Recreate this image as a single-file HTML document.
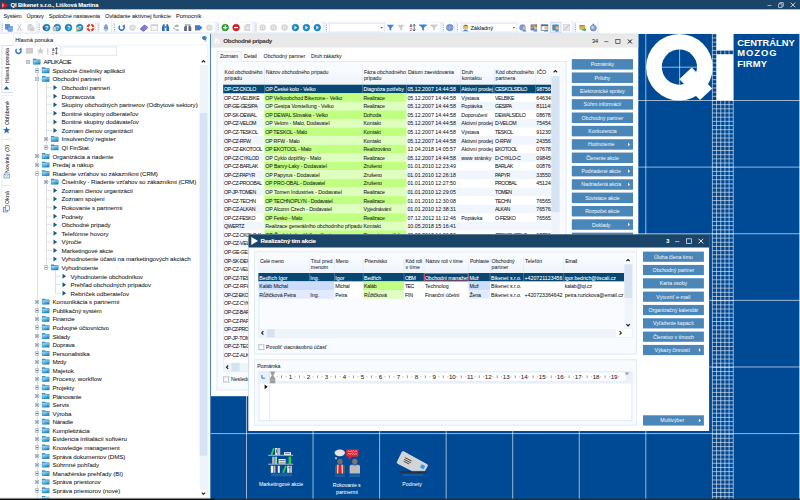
<!DOCTYPE html>
<html lang="sk"><head><meta charset="utf-8"><title>QI Bikenet s.r.o.</title>
<style>
html,body{margin:0;padding:0;}
body{width:800px;height:500px;overflow:hidden;background:#fff;position:relative;font-family:"Liberation Sans",sans-serif;color:#222;}
div{position:absolute;box-sizing:border-box;}
.t{white-space:nowrap;text-shadow:0 0 .6px rgba(20,20,35,.3);}
.w{text-shadow:0 0 .6px rgba(255,255,255,.3);}
svg{position:absolute;overflow:visible;}

</style></head><body>
<svg width="800" height="500" viewBox="0 0 800 500" style="left:0;top:0"><rect x="210.3" y="33.33" width="590" height="467" fill="#004a95"/><path d="M210 100.50H800M210 167.12H800M210 233.74H800M210 300.36H800M210 366.98H800M210 433.60H800M246.50 33.33V500M313.05 33.33V500M379.60 33.33V500M446.15 33.33V500M512.70 33.33V500M579.25 33.33V500M645.80 33.33V500M799.5 33.33V500" stroke="#fff" stroke-opacity=".6" stroke-width="1" fill="none"/><path d="M712.40 33.33V500M716.57 33.33V500M720.74 33.33V500M724.91 33.33V500M729.08 33.33V500M733.25 33.33V500M712.40 33.78H733.25M712.40 37.95H733.25M712.40 42.12H733.25M712.40 46.29H733.25M712.40 50.46H733.25M712.40 54.63H733.25M712.40 58.80H733.25M712.40 62.97H733.25M712.40 67.14H733.25M712.40 71.31H733.25M712.40 75.48H733.25M712.40 79.65H733.25M712.40 83.82H733.25M712.40 87.99H733.25M712.40 92.16H733.25M712.40 96.33H733.25M712.40 100.50H733.25M712.40 104.67H733.25M712.40 108.84H733.25M712.40 113.01H733.25M712.40 117.18H733.25M712.40 121.35H733.25M712.40 125.52H733.25M712.40 129.69H733.25M712.40 133.86H733.25M712.40 138.03H733.25M712.40 142.20H733.25M712.40 146.37H733.25M712.40 150.54H733.25M712.40 154.71H733.25M712.40 158.88H733.25M712.40 163.05H733.25M712.40 167.22H733.25M712.40 171.39H733.25M712.40 175.56H733.25M712.40 179.73H733.25M712.40 183.90H733.25M712.40 188.07H733.25M712.40 192.24H733.25M712.40 196.41H733.25M712.40 200.58H733.25M712.40 204.75H733.25M712.40 208.92H733.25M712.40 213.09H733.25M712.40 217.26H733.25M712.40 221.43H733.25M712.40 225.60H733.25M712.40 229.77H733.25M712.40 233.94H733.25M712.40 238.11H733.25M712.40 242.28H733.25M712.40 246.45H733.25M712.40 250.62H733.25M712.40 254.79H733.25M712.40 258.96H733.25M712.40 263.13H733.25M712.40 267.30H733.25M712.40 271.47H733.25M712.40 275.64H733.25M712.40 279.81H733.25M712.40 283.98H733.25M712.40 288.15H733.25M712.40 292.32H733.25M712.40 296.49H733.25M712.40 300.66H733.25M712.40 304.83H733.25M712.40 309.00H733.25M712.40 313.17H733.25M712.40 317.34H733.25M712.40 321.51H733.25M712.40 325.68H733.25M712.40 329.85H733.25M712.40 334.02H733.25M712.40 338.19H733.25M712.40 342.36H733.25M712.40 346.53H733.25M712.40 350.70H733.25M712.40 354.87H733.25M712.40 359.04H733.25M712.40 363.21H733.25M712.40 367.38H733.25M712.40 371.55H733.25M712.40 375.72H733.25M712.40 379.89H733.25M712.40 384.06H733.25M712.40 388.23H733.25M712.40 392.40H733.25M712.40 396.57H733.25M712.40 400.74H733.25M712.40 404.91H733.25M712.40 409.08H733.25M712.40 413.25H733.25M712.40 417.42H733.25M712.40 421.59H733.25M712.40 425.76H733.25M712.40 429.93H733.25M712.40 434.10H733.25M712.40 438.27H733.25M712.40 442.44H733.25M712.40 446.61H733.25M712.40 450.78H733.25M712.40 454.95H733.25M712.40 459.12H733.25M712.40 463.29H733.25M712.40 467.46H733.25M712.40 471.63H733.25M712.40 475.80H733.25M712.40 479.97H733.25M712.40 484.14H733.25M712.40 488.31H733.25M712.40 492.48H733.25M712.40 496.65H733.25" stroke="#fff" stroke-opacity=".6" stroke-width=".95" fill="none"/><circle cx="679.4" cy="67.2" r="33.3" fill="#fff"/><circle cx="679.4" cy="67.1" r="17.6" fill="#004a95"/><path d="M661.8 67.2H697M679.6 49.5V84.7" stroke="#fff" stroke-opacity=".6" stroke-width="1" fill="none"/><path d="M691.7 67.5L712.2 88.5L700 99.9L679.3 79.2Z" fill="#fff"/><rect x="716.57" y="33.33" width="16.68" height="16.77" fill="#fff"/><rect x="716.57" y="54.4" width="16.68" height="45.7" fill="#fff"/></svg>
<div class="t w" style="left:737.2px;top:36px;font-size:9.4px;line-height:14px;letter-spacing:-0.04px;color:#fff;font-weight:bold;text-shadow:none;">CENTRÁLNY</div>
<div class="t w" style="left:737.2px;top:46px;font-size:9.4px;line-height:14px;letter-spacing:0.96px;color:#fff;font-weight:bold;text-shadow:none;">MOZOG</div>
<div class="t w" style="left:737.2px;top:57px;font-size:9.4px;line-height:14px;letter-spacing:0.15px;color:#fff;font-weight:bold;text-shadow:none;">FIRMY</div>
<svg width="800" height="500" viewBox="0 0 800 500" style="left:0;top:0"><rect x="0" y="9" width="800" height="24.9" fill="#fff"/><rect x="0" y="0" width="800" height="9.35" fill="#1b4568"/></svg>
<svg width="8" height="9" viewBox="0 0 8 9" style="left:1px;top:0.5px"><path d="M0.6 0.6L7.4 4.3L0.6 8.2Z" fill="#e0161c"/><path d="M1.2 2.2L3.2 4.3L1.2 6.4" fill="#fff" fill-opacity=".55"/></svg>
<div class="t w" style="left:10.5px;top:1px;font-size:5.8px;line-height:9px;letter-spacing:-0.09px;color:#fff;font-weight:bold;">QI  Bikenet s.r.o., Lišková Martina</div>
<div class="t w" style="left:767.55px;top:0px;font-size:7px;line-height:10px;color:#dfe8f0;">–</div>
<svg width="6" height="6" viewBox="0 0 6 6" style="left:778.4px;top:1.8px"><path d="M0.6 1.8H4V5.4H0.6ZM1.8 1.8V0.6H5.3V4.2H4" fill="none" stroke="#dfe8f0" stroke-width=".7"/></svg>
<svg width="6" height="6" viewBox="0 0 6 6" style="left:790.4px;top:1.8px"><path d="M0.6 0.6L5.2 5.2M5.2 0.6L0.6 5.2" fill="none" stroke="#eef3f8" stroke-width=".8"/></svg>
<div class="t" style="left:3.5px;top:12px;font-size:5.71px;line-height:8px;letter-spacing:-0.19px;color:#2a2a2a;">Systém</div>
<div class="t" style="left:26.4px;top:12px;font-size:5.71px;line-height:8px;letter-spacing:-0.11px;color:#2a2a2a;">Úpravy</div>
<div class="t" style="left:48.7px;top:12px;font-size:5.71px;line-height:8px;letter-spacing:-0.09px;color:#2a2a2a;">Spoločné nastavenia</div>
<div class="t" style="left:105px;top:12px;font-size:5.71px;line-height:8px;letter-spacing:-0.03px;color:#2a2a2a;">Ovládanie aktívnej funkcie</div>
<div class="t" style="left:176px;top:12px;font-size:5.71px;line-height:8px;letter-spacing:0px;color:#2a2a2a;">Pomocník</div>
<svg width="800" height="500" viewBox="0 0 800 500" style="left:0;top:0"><path d="M0.3 22.1H36.6" stroke="#f3f7fc" stroke-width="1" fill="none"/><path d="M0.3 32.9H36.6M0.8 21.6V33.4M36.1 21.6V33.4" stroke="#e3ecf8" stroke-width="1" fill="none"/><path d="M37.2 22.1H96.2" stroke="#f3f7fc" stroke-width="1" fill="none"/><path d="M37.2 32.9H96.2M37.7 21.6V33.4M95.7 21.6V33.4" stroke="#e3ecf8" stroke-width="1" fill="none"/><path d="M96.8 22.1H112" stroke="#f3f7fc" stroke-width="1" fill="none"/><path d="M96.8 32.9H112M97.3 21.6V33.4M111.5 21.6V33.4" stroke="#e3ecf8" stroke-width="1" fill="none"/><path d="M112.6 22.1H215.6" stroke="#f3f7fc" stroke-width="1" fill="none"/><path d="M112.6 32.9H215.6M113.1 21.6V33.4M215.1 21.6V33.4" stroke="#e3ecf8" stroke-width="1" fill="none"/><path d="M216.2 22.1H253.4" stroke="#f3f7fc" stroke-width="1" fill="none"/><path d="M216.2 32.9H253.4M216.7 21.6V33.4M252.9 21.6V33.4" stroke="#e3ecf8" stroke-width="1" fill="none"/><path d="M254 22.1H323.8" stroke="#f3f7fc" stroke-width="1" fill="none"/><path d="M254 32.9H323.8M254.5 21.6V33.4M323.3 21.6V33.4" stroke="#e3ecf8" stroke-width="1" fill="none"/><path d="M324.4 22.1H440.7" stroke="#f3f7fc" stroke-width="1" fill="none"/><path d="M324.4 32.9H440.7M324.9 21.6V33.4M440.2 21.6V33.4" stroke="#e3ecf8" stroke-width="1" fill="none"/><path d="M441.3 22.1H455" stroke="#f3f7fc" stroke-width="1" fill="none"/><path d="M441.3 32.9H455M441.8 21.6V33.4M454.5 21.6V33.4" stroke="#e3ecf8" stroke-width="1" fill="none"/><path d="M455.6 22.1H572.8" stroke="#f3f7fc" stroke-width="1" fill="none"/><path d="M455.6 32.9H572.8M456.1 21.6V33.4M572.3 21.6V33.4" stroke="#e3ecf8" stroke-width="1" fill="none"/><path d="M573.4 22.1H598.4" stroke="#f3f7fc" stroke-width="1" fill="none"/><path d="M573.4 32.9H598.4M573.9 21.6V33.4M597.9 21.6V33.4" stroke="#e3ecf8" stroke-width="1" fill="none"/><rect x="328.8" y="22.6" width="56.4" height="10" fill="#fff"/><path d="M328.8 23.1H385.2M328.8 32.1H385.2M329.3 22.6V32.6M384.7 22.6V32.6" stroke="#dbe6f5" stroke-width="1" fill="none"/><rect x="460.6" y="22.6" width="56.8" height="10" fill="#fff"/><path d="M460.6 23.1H517.4M460.6 32.1H517.4M461.1 22.6V32.6M516.9 22.6V32.6" stroke="#dbe6f5" stroke-width="1" fill="none"/></svg>
<div class="t" style="left:470.4px;top:24px;font-size:5.71px;line-height:8px;letter-spacing:-0.07px;color:#2a2a2a;">Základný</div>
<svg width="800" height="500" viewBox="0 0 800 500" style="left:0;top:0"><rect x="0" y="33.1" width="601" height="0.7" fill="#e3ecf7"/></svg>
<svg width="800" height="500" viewBox="0 0 800 500" style="left:0;top:0;font-family:'Liberation Sans',sans-serif"><path d="M2.3 23.6V31.4" stroke="#6f93c4" stroke-width=".9" stroke-dasharray=".9 .9" fill="none"/><rect x="5.300000000000001" y="24.200000000000003" width="4.4" height="5" fill="#5b8fd6" stroke="#3f6fb5" stroke-width=".4"/><rect x="7.9" y="26.200000000000003" width="4.6" height="5" fill="#7ba7e4" stroke="#3f6fb5" stroke-width=".4"/><path d="M17.9 24.400000000000002L20.7 29.200000000000003M21.1 24.400000000000002L18.3 29.200000000000003" stroke="#bdbdbd" stroke-width=".8" fill="none"/><circle cx="17.9" cy="30.0" r="1" fill="none" stroke="#c4c4c4" stroke-width=".6"/><circle cx="21.1" cy="30.0" r="1" fill="none" stroke="#c4c4c4" stroke-width=".6"/><rect x="27.299999999999997" y="25.0" width="5.6" height="5.6" fill="#d9d9d9"/><rect x="29.9" y="27.0" width="4.6" height="4.2" fill="#cfcfcf" stroke="#eee" stroke-width=".4"/><rect x="28.7" y="24.0" width="2.8" height="1.4" fill="#c8c8c8"/><path d="M39.2 23.6V31.4" stroke="#6f93c4" stroke-width=".9" stroke-dasharray=".9 .9" fill="none"/><circle cx="46.599999999999994" cy="27.6" r="3.4" fill="#1593cf"/><circle cx="46.599999999999994" cy="27.6" r="3.4" fill="none" stroke="#0c5f9a" stroke-width=".5"/><text x="46.699999999999996" y="29.5" font-size="5.4" font-weight="bold" fill="#e8f6ff" text-anchor="middle">?</text><path d="M42.5 25.8L45.099999999999994 28.0L43.099999999999994 30.200000000000003Z" fill="#e21d1d"/><circle cx="57.199999999999996" cy="27.6" r="3.4" fill="#1593cf"/><circle cx="57.199999999999996" cy="27.6" r="3.4" fill="none" stroke="#0c5f9a" stroke-width=".5"/><text x="57.3" y="29.5" font-size="5.4" font-weight="bold" fill="#e8f6ff" text-anchor="middle">?</text><rect x="53.0" y="26.8" width="3.2" height="4.2" fill="#c9c9c9" stroke="#8d8d8d" stroke-width=".4"/><circle cx="68.5" cy="27.6" r="3.4" fill="#1593cf"/><circle cx="68.5" cy="27.6" r="3.4" fill="none" stroke="#0c5f9a" stroke-width=".5"/><text x="68.60000000000001" y="29.5" font-size="5.4" font-weight="bold" fill="#e8f6ff" text-anchor="middle">?</text><circle cx="79.6" cy="27.6" r="3.4" fill="#1593cf"/><circle cx="79.6" cy="27.6" r="3.4" fill="none" stroke="#0c5f9a" stroke-width=".5"/><text x="79.7" y="29.5" font-size="5.4" font-weight="bold" fill="#e8f6ff" text-anchor="middle">?</text><circle cx="77.5" cy="28.200000000000003" r="1.5" fill="#f1c59a"/><path d="M75.39999999999999 31.400000000000002Q77.5 28.400000000000002 79.7 31.400000000000002Z" fill="#53b14b"/><circle cx="90.5" cy="27.6" r="2.9" fill="none" stroke="#d9432a" stroke-width="2"/><path d="M86.6 27.6H88.6M92.4 27.6H94.4M90.5 23.700000000000003V25.700000000000003M90.5 29.5V31.5" stroke="#fff" stroke-width="1.4"/><path d="M98.8 23.6V31.4" stroke="#6f93c4" stroke-width=".9" stroke-dasharray=".9 .9" fill="none"/><path d="M103.8 29.6Q104 24.200000000000003 106 24.200000000000003Q108 24.200000000000003 108.2 29.6Z" fill="#7fa0c8"/><rect x="103.4" y="29.200000000000003" width="5.2" height="1" fill="#a9c0dc"/><circle cx="106" cy="30.6" r=".8" fill="#8aa6c8"/><path d="M114.6 23.6V31.4" stroke="#6f93c4" stroke-width=".9" stroke-dasharray=".9 .9" fill="none"/><path d="M119.8 25.700000000000003A2.6 2.6 0 1 0 124.2 27.200000000000003" fill="none" stroke="#2f6fd6" stroke-width="1.5"/><path d="M122.10000000000001 26.3L124.7 24.3L124.9 27.8Z" fill="#2f6fd6"/><circle cx="132.5" cy="27.6" r="3.2" fill="#d6d6d6"/><circle cx="132.5" cy="27.6" r="1.9" fill="#e4e4e4"/><path d="M140.1 28.200000000000003L144.3 24.400000000000002L147.70000000000002 26.6L143.70000000000002 30.6Z" fill="#8078d0"/><path d="M140.1 28.200000000000003L143.70000000000002 30.6L147.70000000000002 26.6V28.0L143.70000000000002 31.8L140.1 29.400000000000002Z" fill="#5f58b4"/><rect x="151.0" y="24.8" width="6.8" height="5.6" fill="#f6f6f6" stroke="#bdbdbd" stroke-width=".6"/><rect x="151.0" y="24.8" width="6.8" height="1.2" fill="#cfcfcf"/><path d="M161.9 31.0V27.200000000000003L163.1 24.200000000000003H164.7V31.0ZM169.1 31.0V27.200000000000003L167.9 24.200000000000003H166.3V31.0Z" fill="#2e6cb8"/><rect x="164.5" y="26.0" width="2" height="2" fill="#5a8fd0"/><text x="176.4" y="27.0" font-size="3.6" fill="#3c4a5c" text-anchor="middle">ab</text><text x="177.4" y="30.8" font-size="3.6" fill="#2e8a4a" text-anchor="middle">ac</text><path d="M173.20000000000002 27.8L175.20000000000002 29.400000000000002" stroke="#3f77c9" stroke-width=".8"/><path d="M184.1 31.0V27.6L185.29999999999998 25.200000000000003H186.89999999999998V31.0ZM191.29999999999998 31.0V27.6L190.1 25.200000000000003H188.5V31.0Z" fill="#5d6776"/><rect x="184.7" y="24.0" width="6" height="1.6" fill="#b9bfc8"/><rect x="195.0" y="25.200000000000003" width="5" height="5.2" fill="#6b7685"/><path d="M197.6 26.0H200.6L202.4 27.8L200.6 29.6H197.6Z" fill="#2f7de0"/><circle cx="209.4" cy="27.6" r="3.2" fill="#d6d6d6"/><circle cx="209.4" cy="27.6" r="1.9" fill="#e4e4e4"/><path d="M218.2 23.6V31.4" stroke="#6f93c4" stroke-width=".9" stroke-dasharray=".9 .9" fill="none"/><circle cx="225.2" cy="27.6" r="3.4" fill="#2aa52e"/><circle cx="225.2" cy="27.6" r="3.4" fill="none" stroke="#1c7a22" stroke-width=".5"/><path d="M223.2 27.6H227.2M225.2 25.6V29.6" stroke="#fff" stroke-width="1.1"/><circle cx="236.1" cy="27.6" r="3.4" fill="#d3222a"/><circle cx="236.1" cy="27.6" r="3.4" fill="none" stroke="#a2161d" stroke-width=".5"/><path d="M234.0 27.6H238.2" stroke="#fff" stroke-width="1.2"/><path d="M244.1 31.0V26.0L246.5 24.0H250.1V31.0Z" fill="#d6d6d6"/><rect x="245.9" y="26.400000000000002" width="3" height="3" fill="#e6e6e6"/><path d="M256 23.6V31.4" stroke="#6f93c4" stroke-width=".9" stroke-dasharray=".9 .9" fill="none"/><circle cx="262.6" cy="27.6" r="3.3" fill="#d8d8d8"/><path d="M261.6 26.0V29.200000000000003M263.6 26.0V29.200000000000003" stroke="#ececec" stroke-width=".9"/><circle cx="273.6" cy="27.6" r="3.3" fill="#d8d8d8"/><path d="M272.6 26.0V29.200000000000003M274.6 26.0V29.200000000000003" stroke="#ececec" stroke-width=".9"/><circle cx="284.5" cy="27.6" r="3.3" fill="#d8d8d8"/><path d="M283.5 26.0V29.200000000000003M285.5 26.0V29.200000000000003" stroke="#ececec" stroke-width=".9"/><circle cx="295.4" cy="27.6" r="3.35" fill="#1a8fc9"/><circle cx="295.4" cy="27.6" r="3.35" fill="none" stroke="#0f6aa3" stroke-width=".5"/><path d="M294.4 25.8L297.0 27.6L294.4 29.400000000000002Z" fill="#e9f6ff"/><circle cx="306.4" cy="27.6" r="3.35" fill="#1a8fc9"/><circle cx="306.4" cy="27.6" r="3.35" fill="none" stroke="#0f6aa3" stroke-width=".5"/><path d="M305.4 25.8L308.0 27.6L305.4 29.400000000000002Z" fill="#e9f6ff"/><circle cx="317.3" cy="27.6" r="3.35" fill="#1a8fc9"/><circle cx="317.3" cy="27.6" r="3.35" fill="none" stroke="#0f6aa3" stroke-width=".5"/><path d="M316.3 25.8L318.90000000000003 27.6L316.3 29.400000000000002Z" fill="#e9f6ff"/><path d="M326.4 23.6V31.4" stroke="#6f93c4" stroke-width=".9" stroke-dasharray=".9 .9" fill="none"/><path d="M386.79999999999995 24.8H394.0L391.29999999999995 28.0V30.8L389.5 29.8V28.0Z" fill="#3b7fe0"/><path d="M397.4 24.8H404.6L401.9 28.0V30.8L400.1 29.8V28.0Z" fill="#cdcdcd"/><text x="410.79999999999995" y="27.400000000000002" font-size="3.8" font-weight="bold" fill="#2d59b0" text-anchor="middle">A</text><text x="410.79999999999995" y="31.200000000000003" font-size="3.8" font-weight="bold" fill="#b03030" text-anchor="middle">Z</text><path d="M414.2 24.6V30.6M413.0 25.8L414.2 24.200000000000003L415.4 25.8M413.0 29.400000000000002L414.2 31.0L415.4 29.400000000000002" stroke="#333" stroke-width=".7" fill="none"/><path d="M419.4 24.8H426.6L423.9 28.0V30.8L422.1 29.8V28.0Z" fill="#3b7fe0"/><path d="M419.2 24.6H426.8V26.0H419.2Z" fill="#3b7fe0" fill-opacity=".8"/><path d="M430.4 24.8H437.6L434.9 28.0V30.8L433.1 29.8V28.0Z" fill="#cdcdcd"/><path d="M430.2 24.6H437.8V26.0H430.2Z" fill="#cdcdcd" fill-opacity=".8"/><path d="M443.3 23.6V31.4" stroke="#6f93c4" stroke-width=".9" stroke-dasharray=".9 .9" fill="none"/><circle cx="449.8" cy="27.6" r="3.4" fill="#7b97d6"/><circle cx="449.8" cy="27.6" r="3.4" fill="none" stroke="#5a78bd" stroke-width=".5"/><path d="M446.6 27.6H453.0M449.8 24.400000000000002V30.8" stroke="#a9bdea" stroke-width=".5"/><path d="M457.6 23.6V31.4" stroke="#6f93c4" stroke-width=".9" stroke-dasharray=".9 .9" fill="none"/><circle cx="465.6" cy="27.200000000000003" r="2.6" fill="#f0b87c"/><path d="M462.8 26.6Q465.6 23.0 468.40000000000003 26.6Q465.6 25.400000000000002 462.8 26.6Z" fill="#a8641c"/><path d="M462.20000000000005 31.200000000000003Q465.6 28.200000000000003 469.0 31.200000000000003Z" fill="#3a86d8"/><circle cx="522.5" cy="27.400000000000002" r="3.2" fill="#7b9be0"/><circle cx="524.5" cy="28.0" r="1.7" fill="#f0b87c"/><path d="M522.3000000000001 31.400000000000002Q524.5 28.8 526.7 31.400000000000002Z" fill="#3a86d8"/><rect x="530.6" y="24.400000000000002" width="6.4" height="6" fill="#5a78c8"/><path d="M531 28.6L535 24.6" stroke="#e8a020" stroke-width="1.4"/><circle cx="535.4" cy="28.0" r="1.7" fill="#f0b87c"/><path d="M533.2 31.400000000000002Q535.4 28.8 537.6 31.400000000000002Z" fill="#3a86d8"/><rect x="541.1" y="24.8" width="6.8" height="5.6" fill="#f4f6fa" stroke="#4a5a78" stroke-width=".6"/><rect x="541.1" y="24.8" width="6.8" height="1.3" fill="#51648a"/><circle cx="546.1" cy="28.0" r="1.7" fill="#f0b87c"/><path d="M543.9000000000001 31.400000000000002Q546.1 28.8 548.3000000000001 31.400000000000002Z" fill="#3a86d8"/><rect x="550.4" y="22.200000000000003" width="10.6" height="10.6" fill="#eaf2fc" stroke="#b7d0ee" stroke-width=".6"/><rect x="552.4" y="24.6" width="6.2" height="5.8" fill="#5a78c8"/><path d="M552.6 26.6L554.2 28.400000000000002L556.6 24.6" stroke="#36b24a" stroke-width="1.2" fill="none"/><circle cx="557.0" cy="28.0" r="1.7" fill="#f0b87c"/><path d="M554.8000000000001 31.400000000000002Q557.0 28.8 559.2 31.400000000000002Z" fill="#3a86d8"/><rect x="563.3" y="24.400000000000002" width="6.4" height="6.4" fill="#e9e9e9" stroke="#cfcfcf" stroke-width=".6"/><path d="M564.5 29.6L568.9 25.200000000000003" stroke="#c4c4c4" stroke-width="1.2"/><path d="M575.4 23.6V31.4" stroke="#6f93c4" stroke-width=".9" stroke-dasharray=".9 .9" fill="none"/><rect x="579.3000000000001" y="25.0" width="5.6" height="4.8" fill="#d9b45a"/><rect x="579.3000000000001" y="25.0" width="5.6" height="1.4" fill="#b98f32"/><path d="M582.1 29.200000000000003H584.3000000000001V27.8L586.5 29.8L584.3000000000001 31.6V30.400000000000002H582.1Z" fill="#2fae3a"/><circle cx="593.3" cy="28.0" r="3.1" fill="#8a9fd0"/><circle cx="593.3" cy="28.0" r="3.1" fill="none" stroke="#5d6f9c" stroke-width=".5"/><circle cx="592.6999999999999" cy="27.400000000000002" r="1.4" fill="#c9d6f2"/><rect x="592.5999999999999" y="23.700000000000003" width="1.4" height="1.2" fill="#5d6f9c"/><path d="M380.4 27.2H383L381.7 28.6Z" fill="#333"/><path d="M512.6 27.2H515.2L513.9 28.6Z" fill="#333"/></svg>
<svg width="800" height="500" viewBox="0 0 800 500" style="left:0;top:0"><rect x="0" y="33.9" width="210.3" height="464.8" fill="#fff"/><rect x="13.1" y="34" width="0.6" height="11" fill="#e3ecf7"/><rect x="13.4" y="44.8" width="194" height="0.6" fill="#e3ecf7"/><rect x="207.2" y="45" width="0.6" height="453" fill="#e3ecf7"/><rect x="207.8" y="33.9" width="2.4" height="465" fill="#f6f9fd"/><rect x="210.1" y="33.9" width="0.9" height="465" fill="#4a80b8"/><rect x="1.4" y="45" width="12" height="48" fill="#fff"/><path d="M1.4 45.5H13.4M1.4 92.5H13.4M1.9 45V93" stroke="#d3e1f4" stroke-width="1" fill="none"/><rect x="1.4" y="95" width="12" height="118" fill="#fff"/><path d="M1.4 95.5H13.4M1.9 95V213" stroke="#e6eef9" stroke-width="1" fill="none"/></svg>
<div class="t" style="left:3.73px;top:83px;font-size:5.24px;line-height:7.34px;letter-spacing:0px;color:#2a2a2a;transform-origin:0 0;transform:rotate(-90deg);">Hlavná ponuka</div>
<div class="t" style="left:3.73px;top:125px;font-size:5.24px;line-height:7.34px;letter-spacing:0.11px;color:#2a2a2a;transform-origin:0 0;transform:rotate(-90deg);">Obľúbené</div>
<div class="t" style="left:3.73px;top:172.5px;font-size:5.24px;line-height:7.34px;letter-spacing:0.14px;color:#2a2a2a;transform-origin:0 0;transform:rotate(-90deg);">Novinky (3)</div>
<div class="t" style="left:3.73px;top:203.8px;font-size:5.24px;line-height:7.34px;letter-spacing:0.12px;color:#2a2a2a;transform-origin:0 0;transform:rotate(-90deg);">Okná</div>
<svg width="800" height="500" viewBox="0 0 800 500" style="left:0;top:0"><rect x="2.2" y="139" width="9.4" height="0.6" fill="#cfdcee"/><rect x="2.2" y="185" width="9.4" height="0.6" fill="#cfdcee"/></svg>
<div class="t" style="left:15.2px;top:36px;font-size:5.71px;line-height:8px;letter-spacing:-0.01px;color:#2a2a2a;">Hlavná ponuka</div>
<svg width="800" height="500" viewBox="0 0 800 500" style="left:0;top:0"><rect x="60.4" y="46.4" width="56.4" height="9.4" fill="#fff"/><path d="M60.4 46.9H116.8M60.4 55.3H116.8M60.9 46.4V55.8M116.3 46.4V55.8" stroke="#dfe9f6" stroke-width="1" fill="none"/><rect x="199.7" y="65" width="7.6" height="425" fill="#eff4fa"/><rect x="199.7" y="113" width="7.6" height="342.6" fill="#d5e3f2"/></svg>
<div class="t" style="left:43.5px;top:57px;font-size:6.19px;line-height:9px;letter-spacing:-0.48px;color:#2a2a2a;">APLIKÁCIE</div>
<div class="t" style="left:52.5px;top:66px;font-size:6.19px;line-height:9px;letter-spacing:-0.11px;color:#2a2a2a;">Spoločné číselníky aplikácií</div>
<div class="t" style="left:52.5px;top:74px;font-size:6.19px;line-height:9px;letter-spacing:-0.06px;color:#2a2a2a;">Obchodní partneri</div>
<div class="t" style="left:61.5px;top:83px;font-size:6.19px;line-height:9px;letter-spacing:-0.06px;color:#2a2a2a;">Obchodní partneri</div>
<div class="t" style="left:61.5px;top:92px;font-size:6.19px;line-height:9px;letter-spacing:-0.13px;color:#2a2a2a;">Dopravcovia</div>
<div class="t" style="left:61.5px;top:100px;font-size:6.19px;line-height:9px;letter-spacing:-0.06px;color:#2a2a2a;">Skupiny obchodných partnerov (Odbytové sektory)</div>
<div class="t" style="left:61.5px;top:109px;font-size:6.19px;line-height:9px;letter-spacing:-0.05px;color:#2a2a2a;">Bonitné skupiny odberateľov</div>
<div class="t" style="left:61.5px;top:117px;font-size:6.19px;line-height:9px;letter-spacing:-0.07px;color:#2a2a2a;">Bonitné skupiny dodávateľov</div>
<div class="t" style="left:61.5px;top:126px;font-size:6.19px;line-height:9px;letter-spacing:-0.09px;color:#2a2a2a;">Zoznam členov organizácií</div>
<div class="t" style="left:61.5px;top:134px;font-size:6.19px;line-height:9px;letter-spacing:-0.04px;color:#2a2a2a;">Insolvenčný register</div>
<div class="t" style="left:61.5px;top:143px;font-size:6.19px;line-height:9px;letter-spacing:-0.06px;color:#2a2a2a;">QI FinStat</div>
<div class="t" style="left:52.5px;top:152px;font-size:6.19px;line-height:9px;letter-spacing:-0.05px;color:#2a2a2a;">Organizácia a riadenie</div>
<div class="t" style="left:52.5px;top:160px;font-size:6.19px;line-height:9px;letter-spacing:-0.06px;color:#2a2a2a;">Predaj a nákup</div>
<div class="t" style="left:52.5px;top:169px;font-size:6.19px;line-height:9px;letter-spacing:-0.1px;color:#2a2a2a;">Riadenie vzťahov so zákazníkmi (CRM)</div>
<div class="t" style="left:61.5px;top:177px;font-size:6.19px;line-height:9px;letter-spacing:-0.11px;color:#2a2a2a;">Číselníky - Riadenie vzťahov so zákazníkmi (CRM)</div>
<div class="t" style="left:61.5px;top:186px;font-size:6.19px;line-height:9px;letter-spacing:-0.09px;color:#2a2a2a;">Zoznam členov organizácií</div>
<div class="t" style="left:61.5px;top:194px;font-size:6.19px;line-height:9px;letter-spacing:-0.07px;color:#2a2a2a;">Zoznam spojení</div>
<div class="t" style="left:61.5px;top:203px;font-size:6.19px;line-height:9px;letter-spacing:-0.05px;color:#2a2a2a;">Rokovanie s partnermi</div>
<div class="t" style="left:61.5px;top:212px;font-size:6.19px;line-height:9px;letter-spacing:-0.17px;color:#2a2a2a;">Podnety</div>
<div class="t" style="left:61.5px;top:220px;font-size:6.19px;line-height:9px;letter-spacing:-0.12px;color:#2a2a2a;">Obchodné prípady</div>
<div class="t" style="left:61.5px;top:229px;font-size:6.19px;line-height:9px;letter-spacing:0px;color:#2a2a2a;">Telefónne hovory</div>
<div class="t" style="left:61.5px;top:237px;font-size:6.19px;line-height:9px;letter-spacing:-0.12px;color:#2a2a2a;">Výročie</div>
<div class="t" style="left:61.5px;top:246px;font-size:6.19px;line-height:9px;letter-spacing:-0.09px;color:#2a2a2a;">Marketingové akcie</div>
<div class="t" style="left:61.5px;top:254px;font-size:6.19px;line-height:9px;letter-spacing:-0.06px;color:#2a2a2a;">Vyhodnotenie účasti na marketingových akciách</div>
<div class="t" style="left:61.5px;top:263px;font-size:6.19px;line-height:9px;letter-spacing:-0.09px;color:#2a2a2a;">Vyhodnotenie</div>
<div class="t" style="left:70.5px;top:272px;font-size:6.19px;line-height:9px;letter-spacing:-0.09px;color:#2a2a2a;">Vyhodnotenie obchodníkov</div>
<div class="t" style="left:70.5px;top:280px;font-size:6.19px;line-height:9px;letter-spacing:-0.08px;color:#2a2a2a;">Prehľad obchodných prípadov</div>
<div class="t" style="left:70.5px;top:289px;font-size:6.19px;line-height:9px;letter-spacing:-0.04px;color:#2a2a2a;">Rebríček odberateľov</div>
<div class="t" style="left:52.5px;top:297px;font-size:6.19px;line-height:9px;letter-spacing:-0.05px;color:#2a2a2a;">Komunikácia s partnermi</div>
<div class="t" style="left:52.5px;top:306px;font-size:6.19px;line-height:9px;letter-spacing:-0.13px;color:#2a2a2a;">Publikačný systém</div>
<div class="t" style="left:52.5px;top:314px;font-size:6.19px;line-height:9px;letter-spacing:-0.17px;color:#2a2a2a;">Financie</div>
<div class="t" style="left:52.5px;top:323px;font-size:6.19px;line-height:9px;letter-spacing:-0.12px;color:#2a2a2a;">Podvojné účtovníctvo</div>
<div class="t" style="left:52.5px;top:332px;font-size:6.19px;line-height:9px;letter-spacing:-0.18px;color:#2a2a2a;">Sklady</div>
<div class="t" style="left:52.5px;top:340px;font-size:6.19px;line-height:9px;letter-spacing:-0.19px;color:#2a2a2a;">Doprava</div>
<div class="t" style="left:52.5px;top:349px;font-size:6.19px;line-height:9px;letter-spacing:-0.11px;color:#2a2a2a;">Personalistika</div>
<div class="t" style="left:52.5px;top:357px;font-size:6.19px;line-height:9px;letter-spacing:-0.32px;color:#2a2a2a;">Mzdy</div>
<div class="t" style="left:52.5px;top:366px;font-size:6.19px;line-height:9px;letter-spacing:-0.05px;color:#2a2a2a;">Majetok</div>
<div class="t" style="left:52.5px;top:374px;font-size:6.19px;line-height:9px;letter-spacing:-0.01px;color:#2a2a2a;">Procesy, workflow</div>
<div class="t" style="left:52.5px;top:383px;font-size:6.19px;line-height:9px;letter-spacing:-0.07px;color:#2a2a2a;">Projekty</div>
<div class="t" style="left:52.5px;top:392px;font-size:6.19px;line-height:9px;letter-spacing:-0.18px;color:#2a2a2a;">Plánovanie</div>
<div class="t" style="left:52.5px;top:400px;font-size:6.19px;line-height:9px;letter-spacing:-0.12px;color:#2a2a2a;">Servis</div>
<div class="t" style="left:52.5px;top:409px;font-size:6.19px;line-height:9px;letter-spacing:-0.14px;color:#2a2a2a;">Výroba</div>
<div class="t" style="left:52.5px;top:417px;font-size:6.19px;line-height:9px;letter-spacing:-0.17px;color:#2a2a2a;">Náradie</div>
<div class="t" style="left:52.5px;top:426px;font-size:6.19px;line-height:9px;letter-spacing:-0.12px;color:#2a2a2a;">Kompletizácia</div>
<div class="t" style="left:52.5px;top:434px;font-size:6.19px;line-height:9px;letter-spacing:-0.07px;color:#2a2a2a;">Evidencia inštalácií softvéru</div>
<div class="t" style="left:52.5px;top:443px;font-size:6.19px;line-height:9px;letter-spacing:-0.07px;color:#2a2a2a;">Knowledge management</div>
<div class="t" style="left:52.5px;top:452px;font-size:6.19px;line-height:9px;letter-spacing:-0.08px;color:#2a2a2a;">Správa dokumentov (DMS)</div>
<div class="t" style="left:52.5px;top:460px;font-size:6.19px;line-height:9px;letter-spacing:-0.05px;color:#2a2a2a;">Súhrnné pohľady</div>
<div class="t" style="left:52.5px;top:469px;font-size:6.19px;line-height:9px;letter-spacing:-0.03px;color:#2a2a2a;">Manažérske prehľady (BI)</div>
<div class="t" style="left:52.5px;top:477px;font-size:6.19px;line-height:9px;letter-spacing:-0.02px;color:#2a2a2a;">Správa priestorov</div>
<div class="t" style="left:52.5px;top:486px;font-size:6.19px;line-height:9px;letter-spacing:0px;color:#2a2a2a;">Správa priestorov (nové)</div>
<div style="left:0;top:490px;width:199px;height:7.4px;overflow:hidden">
<div class="t" style="left:52.5px;top:4px;font-size:6.19px;line-height:9px;letter-spacing:-0.07px;color:#2a2a2a;">Webové aplikácie</div>
</div>
<svg width="800" height="500" viewBox="0 0 800 500" style="left:0;top:0;font-family:'Liberation Sans',sans-serif"><defs><linearGradient id="fg" x1="0" y1="0" x2="0.6" y2="1"><stop offset="0" stop-color="#c4e8f8"/><stop offset=".55" stop-color="#62b6e0"/><stop offset="1" stop-color="#2a82b4"/></linearGradient></defs><path d="M29.9 61.9H32.5M38.9 70.47H41.5M38.9 79.04H41.5M46.5 87.61H52M46.5 96.19H52M46.5 104.76H52M46.5 113.33H52M46.5 121.9H52M46.5 130.47H52M47.9 139.04H50.5M47.9 147.61H50.5M38.9 156.19H41.5M38.9 164.76H41.5M38.9 173.33H41.5M47.9 181.9H50.5M46.5 190.47H52M46.5 199.04H52M46.5 207.61H52M46.5 216.19H52M46.5 224.76H52M46.5 233.33H52M46.5 241.9H52M46.5 250.47H52M46.5 259.04H52M47.9 267.61H50.5M55.5 276.19H61M55.5 284.76H61M55.5 293.33H61M38.9 301.9H41.5M38.9 310.47H41.5M38.9 319.04H41.5M38.9 327.61H41.5M38.9 336.18H41.5M38.9 344.76H41.5M38.9 353.33H41.5M38.9 361.9H41.5M38.9 370.47H41.5M38.9 379.04H41.5M38.9 387.61H41.5M38.9 396.18H41.5M38.9 404.76H41.5M38.9 413.33H41.5M38.9 421.9H41.5M38.9 430.47H41.5M38.9 439.04H41.5M38.9 447.61H41.5M38.9 456.18H41.5M38.9 464.76H41.5M38.9 473.33H41.5M38.9 481.9H41.5M38.9 490.47H41.5M37.5 66.47V498M46.5 81.04V147.61M46.5 175.33V267.61M55.5 269.61V293.33" stroke="#c9cdd3" stroke-width=".6" fill="none"/><path d="M3.8 89.6L6.5 86L9.2 89.6Z" fill="#1f5a88"/><path d="M6.6 126.6L7.6 129L10.2 129.2L8.2 130.8L8.9 133.4L6.6 132L4.3 133.4L5 130.8L3 129.2L5.6 129Z" fill="#2e6fb5"/><rect x="4" y="174" width="5.4" height="4" fill="#f4f7fb" stroke="#4a78b8" stroke-width=".6"/><path d="M4 174L6.7 176.4L9.4 174" fill="none" stroke="#4a78b8" stroke-width=".5"/><rect x="3.6" y="207.4" width="4" height="4.6" fill="#dfe9f8" stroke="#3f6fb5" stroke-width=".6"/><rect x="5.6" y="205.8" width="4" height="4.6" fill="#f3f7fd" stroke="#3f6fb5" stroke-width=".6"/><path d="M201.8 37.8A2.4 2.2 0 1 1 206.6 38.6L205.6 40.6L203 39.8Z" fill="#3f82c4"/><path d="M204.8 40.2L206.6 42" stroke="#7d8894" stroke-width=".6"/><path d="M16.6 49.0A2.6 2.6 0 1 0 21.0 50.5" fill="none" stroke="#2f6fd6" stroke-width="1.5"/><path d="M18.9 49.6L21.5 47.6L21.7 51.1Z" fill="#2f6fd6"/><rect x="25.8" y="48" width="7.2" height="5.6" fill="#c9c9c9"/><path d="M25.8 49.9H33M25.8 51.8H33" stroke="#dcdcdc" stroke-width=".5"/><path d="M40.5 47.2L41.6 49.7L44.3 49.9L42.2 51.6L42.9 54.3L40.5 52.8L38.1 54.3L38.8 51.6L36.7 49.9L39.4 49.7Z" fill="#cdcdcd"/><path d="M47.8 48V54.6" stroke="#8fb0dc" stroke-width=".7"/><text x="53.0" y="50.699999999999996" font-size="3.8" font-weight="bold" fill="#2d59b0" text-anchor="middle">A</text><text x="53.0" y="54.5" font-size="3.8" font-weight="bold" fill="#b03030" text-anchor="middle">Z</text><path d="M56.4 47.9V53.9M55.2 49.1L56.4 47.5L57.6 49.1M55.2 52.699999999999996L56.4 54.3L57.6 52.699999999999996" stroke="#333" stroke-width=".7" fill="none"/><path d="M201.8 62.3L203.5 60.6L205.2 62.3" fill="none" stroke="#1a1a1a" stroke-width="1.1"/><path d="M201.8 492.6L203.5 494.3L205.2 492.6" fill="none" stroke="#1a1a1a" stroke-width="1.1"/><path d="M32.9 58.8H35.9L36.7 59.6H40.5V64.6H32.9Z" fill="#3a93c6"/><rect x="33.4" y="60.3" width="6.6" height="3.9" fill="url(#fg)"/><rect x="26.25" y="60.25" width="3.5" height="3.5" fill="#fcfdff" stroke="#8f98a8" stroke-width=".5"/><path d="M27 62H29" stroke="#2f4fa8" stroke-width=".6"/><path d="M41.9 67.37H44.9L45.7 68.17H49.5V73.17H41.9Z" fill="#3a93c6"/><rect x="42.4" y="68.87" width="6.6" height="3.9" fill="url(#fg)"/><rect x="35.25" y="68.75" width="3.5" height="3.5" fill="#fcfdff" stroke="#8f98a8" stroke-width=".5"/><path d="M36 70.5H38M37 69.5V71.5" stroke="#2f4fa8" stroke-width=".6"/><path d="M41.9 75.94H44.9L45.7 76.74H49.5V81.74H41.9Z" fill="#3a93c6"/><rect x="42.4" y="77.44" width="6.6" height="3.9" fill="url(#fg)"/><rect x="35.25" y="77.25" width="3.5" height="3.5" fill="#fcfdff" stroke="#8f98a8" stroke-width=".5"/><path d="M36 79H38" stroke="#2f4fa8" stroke-width=".6"/><path d="M53.5 85.11L57.1 87.61L53.5 90.11Z" fill="#155a8a"/><path d="M53.5 93.69L57.1 96.19L53.5 98.69Z" fill="#155a8a"/><path d="M53.5 102.26L57.1 104.76L53.5 107.26Z" fill="#155a8a"/><path d="M53.5 110.83L57.1 113.33L53.5 115.83Z" fill="#155a8a"/><path d="M53.5 119.4L57.1 121.9L53.5 124.4Z" fill="#155a8a"/><path d="M53.5 127.97L57.1 130.47L53.5 132.97Z" fill="#155a8a"/><path d="M50.9 135.94H53.9L54.7 136.74H58.5V141.74H50.9Z" fill="#3a93c6"/><rect x="51.4" y="137.44" width="6.6" height="3.9" fill="url(#fg)"/><rect x="44.25" y="137.25" width="3.5" height="3.5" fill="#fcfdff" stroke="#8f98a8" stroke-width=".5"/><path d="M45 139H47M46 138V140" stroke="#2f4fa8" stroke-width=".6"/><path d="M50.9 144.51H53.9L54.7 145.31H58.5V150.31H50.9Z" fill="#3a93c6"/><rect x="51.4" y="146.01" width="6.6" height="3.9" fill="url(#fg)"/><rect x="44.25" y="145.75" width="3.5" height="3.5" fill="#fcfdff" stroke="#8f98a8" stroke-width=".5"/><path d="M45 147.5H47M46 146.5V148.5" stroke="#2f4fa8" stroke-width=".6"/><path d="M41.9 153.09H44.9L45.7 153.89H49.5V158.89H41.9Z" fill="#3a93c6"/><rect x="42.4" y="154.59" width="6.6" height="3.9" fill="url(#fg)"/><rect x="35.25" y="154.25" width="3.5" height="3.5" fill="#fcfdff" stroke="#8f98a8" stroke-width=".5"/><path d="M36 156H38M37 155V157" stroke="#2f4fa8" stroke-width=".6"/><path d="M41.9 161.66H44.9L45.7 162.46H49.5V167.46H41.9Z" fill="#3a93c6"/><rect x="42.4" y="163.16" width="6.6" height="3.9" fill="url(#fg)"/><rect x="35.25" y="163.25" width="3.5" height="3.5" fill="#fcfdff" stroke="#8f98a8" stroke-width=".5"/><path d="M36 165H38M37 164V166" stroke="#2f4fa8" stroke-width=".6"/><path d="M41.9 170.23H44.9L45.7 171.03H49.5V176.03H41.9Z" fill="#3a93c6"/><rect x="42.4" y="171.73" width="6.6" height="3.9" fill="url(#fg)"/><rect x="35.25" y="171.75" width="3.5" height="3.5" fill="#fcfdff" stroke="#8f98a8" stroke-width=".5"/><path d="M36 173.5H38" stroke="#2f4fa8" stroke-width=".6"/><path d="M50.9 178.8H53.9L54.7 179.6H58.5V184.6H50.9Z" fill="#3a93c6"/><rect x="51.4" y="180.3" width="6.6" height="3.9" fill="url(#fg)"/><rect x="44.25" y="180.25" width="3.5" height="3.5" fill="#fcfdff" stroke="#8f98a8" stroke-width=".5"/><path d="M45 182H47M46 181V183" stroke="#2f4fa8" stroke-width=".6"/><path d="M53.5 187.97L57.1 190.47L53.5 192.97Z" fill="#155a8a"/><path d="M53.5 196.54L57.1 199.04L53.5 201.54Z" fill="#155a8a"/><path d="M53.5 205.11L57.1 207.61L53.5 210.11Z" fill="#155a8a"/><path d="M53.5 213.69L57.1 216.19L53.5 218.69Z" fill="#155a8a"/><path d="M53.5 222.26L57.1 224.76L53.5 227.26Z" fill="#155a8a"/><path d="M53.5 230.83L57.1 233.33L53.5 235.83Z" fill="#155a8a"/><path d="M53.5 239.4L57.1 241.9L53.5 244.4Z" fill="#155a8a"/><path d="M53.5 247.97L57.1 250.47L53.5 252.97Z" fill="#155a8a"/><path d="M53.5 256.54L57.1 259.04L53.5 261.54Z" fill="#155a8a"/><path d="M50.9 264.51H53.9L54.7 265.31H58.5V270.31H50.9Z" fill="#3a93c6"/><rect x="51.4" y="266.01" width="6.6" height="3.9" fill="url(#fg)"/><rect x="44.25" y="265.75" width="3.5" height="3.5" fill="#fcfdff" stroke="#8f98a8" stroke-width=".5"/><path d="M45 267.5H47" stroke="#2f4fa8" stroke-width=".6"/><path d="M62.5 273.69L66.1 276.19L62.5 278.69Z" fill="#155a8a"/><path d="M62.5 282.26L66.1 284.76L62.5 287.26Z" fill="#155a8a"/><path d="M62.5 290.83L66.1 293.33L62.5 295.83Z" fill="#155a8a"/><path d="M41.9 298.8H44.9L45.7 299.6H49.5V304.6H41.9Z" fill="#3a93c6"/><rect x="42.4" y="300.3" width="6.6" height="3.9" fill="url(#fg)"/><rect x="35.25" y="300.25" width="3.5" height="3.5" fill="#fcfdff" stroke="#8f98a8" stroke-width=".5"/><path d="M36 302H38M37 301V303" stroke="#2f4fa8" stroke-width=".6"/><path d="M41.9 307.37H44.9L45.7 308.17H49.5V313.17H41.9Z" fill="#3a93c6"/><rect x="42.4" y="308.87" width="6.6" height="3.9" fill="url(#fg)"/><rect x="35.25" y="308.75" width="3.5" height="3.5" fill="#fcfdff" stroke="#8f98a8" stroke-width=".5"/><path d="M36 310.5H38M37 309.5V311.5" stroke="#2f4fa8" stroke-width=".6"/><path d="M41.9 315.94H44.9L45.7 316.74H49.5V321.74H41.9Z" fill="#3a93c6"/><rect x="42.4" y="317.44" width="6.6" height="3.9" fill="url(#fg)"/><rect x="35.25" y="317.25" width="3.5" height="3.5" fill="#fcfdff" stroke="#8f98a8" stroke-width=".5"/><path d="M36 319H38M37 318V320" stroke="#2f4fa8" stroke-width=".6"/><path d="M41.9 324.51H44.9L45.7 325.31H49.5V330.31H41.9Z" fill="#3a93c6"/><rect x="42.4" y="326.01" width="6.6" height="3.9" fill="url(#fg)"/><rect x="35.25" y="325.75" width="3.5" height="3.5" fill="#fcfdff" stroke="#8f98a8" stroke-width=".5"/><path d="M36 327.5H38M37 326.5V328.5" stroke="#2f4fa8" stroke-width=".6"/><path d="M41.9 333.08H44.9L45.7 333.88H49.5V338.88H41.9Z" fill="#3a93c6"/><rect x="42.4" y="334.58" width="6.6" height="3.9" fill="url(#fg)"/><rect x="35.25" y="334.25" width="3.5" height="3.5" fill="#fcfdff" stroke="#8f98a8" stroke-width=".5"/><path d="M36 336H38M37 335V337" stroke="#2f4fa8" stroke-width=".6"/><path d="M41.9 341.66H44.9L45.7 342.46H49.5V347.46H41.9Z" fill="#3a93c6"/><rect x="42.4" y="343.16" width="6.6" height="3.9" fill="url(#fg)"/><rect x="35.25" y="343.25" width="3.5" height="3.5" fill="#fcfdff" stroke="#8f98a8" stroke-width=".5"/><path d="M36 345H38M37 344V346" stroke="#2f4fa8" stroke-width=".6"/><path d="M41.9 350.23H44.9L45.7 351.03H49.5V356.03H41.9Z" fill="#3a93c6"/><rect x="42.4" y="351.73" width="6.6" height="3.9" fill="url(#fg)"/><rect x="35.25" y="351.75" width="3.5" height="3.5" fill="#fcfdff" stroke="#8f98a8" stroke-width=".5"/><path d="M36 353.5H38M37 352.5V354.5" stroke="#2f4fa8" stroke-width=".6"/><path d="M41.9 358.8H44.9L45.7 359.6H49.5V364.6H41.9Z" fill="#3a93c6"/><rect x="42.4" y="360.3" width="6.6" height="3.9" fill="url(#fg)"/><rect x="35.25" y="360.25" width="3.5" height="3.5" fill="#fcfdff" stroke="#8f98a8" stroke-width=".5"/><path d="M36 362H38M37 361V363" stroke="#2f4fa8" stroke-width=".6"/><path d="M41.9 367.37H44.9L45.7 368.17H49.5V373.17H41.9Z" fill="#3a93c6"/><rect x="42.4" y="368.87" width="6.6" height="3.9" fill="url(#fg)"/><rect x="35.25" y="368.75" width="3.5" height="3.5" fill="#fcfdff" stroke="#8f98a8" stroke-width=".5"/><path d="M36 370.5H38M37 369.5V371.5" stroke="#2f4fa8" stroke-width=".6"/><path d="M41.9 375.94H44.9L45.7 376.74H49.5V381.74H41.9Z" fill="#3a93c6"/><rect x="42.4" y="377.44" width="6.6" height="3.9" fill="url(#fg)"/><rect x="35.25" y="377.25" width="3.5" height="3.5" fill="#fcfdff" stroke="#8f98a8" stroke-width=".5"/><path d="M36 379H38M37 378V380" stroke="#2f4fa8" stroke-width=".6"/><path d="M41.9 384.51H44.9L45.7 385.31H49.5V390.31H41.9Z" fill="#3a93c6"/><rect x="42.4" y="386.01" width="6.6" height="3.9" fill="url(#fg)"/><rect x="35.25" y="385.75" width="3.5" height="3.5" fill="#fcfdff" stroke="#8f98a8" stroke-width=".5"/><path d="M36 387.5H38M37 386.5V388.5" stroke="#2f4fa8" stroke-width=".6"/><path d="M41.9 393.08H44.9L45.7 393.88H49.5V398.88H41.9Z" fill="#3a93c6"/><rect x="42.4" y="394.58" width="6.6" height="3.9" fill="url(#fg)"/><rect x="35.25" y="394.25" width="3.5" height="3.5" fill="#fcfdff" stroke="#8f98a8" stroke-width=".5"/><path d="M36 396H38M37 395V397" stroke="#2f4fa8" stroke-width=".6"/><path d="M41.9 401.66H44.9L45.7 402.46H49.5V407.46H41.9Z" fill="#3a93c6"/><rect x="42.4" y="403.16" width="6.6" height="3.9" fill="url(#fg)"/><rect x="35.25" y="403.25" width="3.5" height="3.5" fill="#fcfdff" stroke="#8f98a8" stroke-width=".5"/><path d="M36 405H38M37 404V406" stroke="#2f4fa8" stroke-width=".6"/><path d="M41.9 410.23H44.9L45.7 411.03H49.5V416.03H41.9Z" fill="#3a93c6"/><rect x="42.4" y="411.73" width="6.6" height="3.9" fill="url(#fg)"/><rect x="35.25" y="411.75" width="3.5" height="3.5" fill="#fcfdff" stroke="#8f98a8" stroke-width=".5"/><path d="M36 413.5H38M37 412.5V414.5" stroke="#2f4fa8" stroke-width=".6"/><path d="M41.9 418.8H44.9L45.7 419.6H49.5V424.6H41.9Z" fill="#3a93c6"/><rect x="42.4" y="420.3" width="6.6" height="3.9" fill="url(#fg)"/><rect x="35.25" y="420.25" width="3.5" height="3.5" fill="#fcfdff" stroke="#8f98a8" stroke-width=".5"/><path d="M36 422H38M37 421V423" stroke="#2f4fa8" stroke-width=".6"/><path d="M41.9 427.37H44.9L45.7 428.17H49.5V433.17H41.9Z" fill="#3a93c6"/><rect x="42.4" y="428.87" width="6.6" height="3.9" fill="url(#fg)"/><rect x="35.25" y="428.75" width="3.5" height="3.5" fill="#fcfdff" stroke="#8f98a8" stroke-width=".5"/><path d="M36 430.5H38M37 429.5V431.5" stroke="#2f4fa8" stroke-width=".6"/><path d="M41.9 435.94H44.9L45.7 436.74H49.5V441.74H41.9Z" fill="#3a93c6"/><rect x="42.4" y="437.44" width="6.6" height="3.9" fill="url(#fg)"/><rect x="35.25" y="437.25" width="3.5" height="3.5" fill="#fcfdff" stroke="#8f98a8" stroke-width=".5"/><path d="M36 439H38M37 438V440" stroke="#2f4fa8" stroke-width=".6"/><path d="M41.9 444.51H44.9L45.7 445.31H49.5V450.31H41.9Z" fill="#3a93c6"/><rect x="42.4" y="446.01" width="6.6" height="3.9" fill="url(#fg)"/><rect x="35.25" y="445.75" width="3.5" height="3.5" fill="#fcfdff" stroke="#8f98a8" stroke-width=".5"/><path d="M36 447.5H38M37 446.5V448.5" stroke="#2f4fa8" stroke-width=".6"/><path d="M41.9 453.08H44.9L45.7 453.88H49.5V458.88H41.9Z" fill="#3a93c6"/><rect x="42.4" y="454.58" width="6.6" height="3.9" fill="url(#fg)"/><rect x="35.25" y="454.25" width="3.5" height="3.5" fill="#fcfdff" stroke="#8f98a8" stroke-width=".5"/><path d="M36 456H38M37 455V457" stroke="#2f4fa8" stroke-width=".6"/><path d="M41.9 461.66H44.9L45.7 462.46H49.5V467.46H41.9Z" fill="#3a93c6"/><rect x="42.4" y="463.16" width="6.6" height="3.9" fill="url(#fg)"/><rect x="35.25" y="463.25" width="3.5" height="3.5" fill="#fcfdff" stroke="#8f98a8" stroke-width=".5"/><path d="M36 465H38M37 464V466" stroke="#2f4fa8" stroke-width=".6"/><path d="M41.9 470.23H44.9L45.7 471.03H49.5V476.03H41.9Z" fill="#3a93c6"/><rect x="42.4" y="471.73" width="6.6" height="3.9" fill="url(#fg)"/><rect x="35.25" y="471.75" width="3.5" height="3.5" fill="#fcfdff" stroke="#8f98a8" stroke-width=".5"/><path d="M36 473.5H38M37 472.5V474.5" stroke="#2f4fa8" stroke-width=".6"/><path d="M41.9 478.8H44.9L45.7 479.6H49.5V484.6H41.9Z" fill="#3a93c6"/><rect x="42.4" y="480.3" width="6.6" height="3.9" fill="url(#fg)"/><rect x="35.25" y="480.25" width="3.5" height="3.5" fill="#fcfdff" stroke="#8f98a8" stroke-width=".5"/><path d="M36 482H38M37 481V483" stroke="#2f4fa8" stroke-width=".6"/><path d="M41.9 487.37H44.9L45.7 488.17H49.5V493.17H41.9Z" fill="#3a93c6"/><rect x="42.4" y="488.87" width="6.6" height="3.9" fill="url(#fg)"/><rect x="35.25" y="488.75" width="3.5" height="3.5" fill="#fcfdff" stroke="#8f98a8" stroke-width=".5"/><path d="M36 490.5H38M37 489.5V491.5" stroke="#2f4fa8" stroke-width=".6"/><path d="M41.9 495.94H44.9L45.7 496.74H49.5V501.74H41.9Z" fill="#3a93c6"/><rect x="42.4" y="497.44" width="6.6" height="3.9" fill="url(#fg)"/></svg>
<svg width="800" height="500" viewBox="0 0 800 500" style="left:0;top:0"><rect x="0" y="497.4" width="210" height="0.7" fill="#dce7f5"/><rect x="0" y="498.7" width="800" height="1.3" fill="#2b2b2b"/><rect x="0" y="498.7" width="215" height="1.3" fill="#0c0c0c"/><rect x="211" y="34.2" width="427.3" height="362" fill="#fff"/><rect x="211" y="34.2" width="427.3" height="13.4" fill="#e9e9e9"/></svg>
<div class="t" style="left:223.3px;top:36px;font-size:6.2px;line-height:9px;letter-spacing:-0.38px;color:#4b4744;font-weight:bold;">Obchodné prípady</div>
<div class="t" style="left:591.94px;top:37px;font-size:5.6px;line-height:8px;letter-spacing:-0.06px;color:#333;">34</div>
<svg width="800" height="500" viewBox="0 0 800 500" style="left:0;top:0"><rect x="216.5" y="61" width="350" height="329.4" fill="#f8fbff"/><path d="M216.5 61.5H566.5M216.5 389.9H566.5M217 61V390.4M566 61V390.4" stroke="#e2ebf8" stroke-width="1" fill="none"/><rect x="216.5" y="51.2" width="25.4" height="10.4" fill="#f8fbff"/><path d="M216.5 51.7H241.9M217 51.2V61.6M241.4 51.2V61.6" stroke="#e2ebf8" stroke-width="1" fill="none"/></svg>
<div class="t" style="left:220.1px;top:52px;font-size:5.24px;line-height:8px;letter-spacing:-0.17px;color:#333;">Zoznam</div>
<div class="t" style="left:244px;top:52px;font-size:5.24px;line-height:8px;letter-spacing:-0.1px;color:#333;">Detail</div>
<div class="t" style="left:263.6px;top:52px;font-size:5.24px;line-height:8px;letter-spacing:-0.02px;color:#333;">Obchodný partner</div>
<div class="t" style="left:311px;top:52px;font-size:5.24px;line-height:8px;letter-spacing:-0.1px;color:#333;">Druh zákazky</div>
<svg width="800" height="500" viewBox="0 0 800 500" style="left:0;top:0"><rect x="223.2" y="66.9" width="336.5" height="305.1" fill="#fff"/><path d="M223.2 67.4H559.7M223.2 371.5H559.7M223.7 66.9V372M559.2 66.9V372" stroke="#dfe9f6" stroke-width="1" fill="none"/><defs><linearGradient id="g0" x1="0" y1="0" x2="0" y2="1"><stop offset="0" stop-color="#fbfdff"/><stop offset="1" stop-color="#eef3fb"/></linearGradient></defs><rect x="223.2" y="66.9" width="328.1" height="17.8" fill="url(#g0)"/><rect x="264" y="67.4" width="0.6" height="17.3" fill="#dde7f5"/><rect x="362.2" y="67.4" width="0.6" height="17.3" fill="#dde7f5"/><rect x="406.2" y="67.4" width="0.6" height="17.3" fill="#dde7f5"/><rect x="460" y="67.4" width="0.6" height="17.3" fill="#dde7f5"/><rect x="493.8" y="67.4" width="0.6" height="17.3" fill="#dde7f5"/><rect x="535.1" y="67.4" width="0.6" height="17.3" fill="#dde7f5"/><rect x="551" y="67.4" width="0.6" height="17.3" fill="#dde7f5"/></svg>
<div class="t" style="left:224.6px;top:68px;font-size:5.24px;line-height:8px;letter-spacing:-0.13px;color:#2f3238;">Kód obchodného</div>
<div class="t" style="left:224.6px;top:74px;font-size:5.24px;line-height:8px;letter-spacing:-0.05px;color:#2f3238;">prípadu</div>
<div class="t" style="left:265.7px;top:68px;font-size:5.24px;line-height:8px;letter-spacing:-0.07px;color:#2f3238;">Názov obchodného prípadu</div>
<div class="t" style="left:363.9px;top:68px;font-size:5.24px;line-height:8px;letter-spacing:0.01px;color:#2f3238;">Fáza obchodného</div>
<div class="t" style="left:363.9px;top:74px;font-size:5.24px;line-height:8px;letter-spacing:-0.05px;color:#2f3238;">prípadu</div>
<div class="t" style="left:407.9px;top:68px;font-size:5.24px;line-height:8px;letter-spacing:-0.09px;color:#2f3238;">Dátum zaevidovania</div>
<div class="t" style="left:461.7px;top:68px;font-size:5.24px;line-height:8px;letter-spacing:-0.02px;color:#2f3238;">Druh</div>
<div class="t" style="left:461.7px;top:74px;font-size:5.24px;line-height:8px;letter-spacing:0.04px;color:#2f3238;">kontaktu</div>
<div class="t" style="left:495.5px;top:68px;font-size:5.24px;line-height:8px;letter-spacing:-0.09px;color:#2f3238;">Kód obchodného</div>
<div class="t" style="left:495.5px;top:74px;font-size:5.24px;line-height:8px;letter-spacing:0.01px;color:#2f3238;">partnera</div>
<div class="t" style="left:536.8px;top:68px;font-size:5.24px;line-height:8px;letter-spacing:-0.04px;color:#2f3238;">IČO</div>
<svg width="800" height="500" viewBox="0 0 800 500" style="left:0;top:0"><rect x="223.2" y="84.7" width="328.1" height="8.57" fill="#074872"/><rect x="264" y="84.7" width="0.6" height="8.57" fill="#5f8db0"/><rect x="362.2" y="84.7" width="0.6" height="8.57" fill="#5f8db0"/><rect x="406.2" y="84.7" width="0.6" height="8.57" fill="#5f8db0"/><rect x="460" y="84.7" width="0.6" height="8.57" fill="#5f8db0"/><rect x="493.8" y="84.7" width="0.6" height="8.57" fill="#5f8db0"/><rect x="535.1" y="84.7" width="0.6" height="8.57" fill="#5f8db0"/></svg>
<div class="t w" style="left:224.1px;top:85px;font-size:5.24px;line-height:8px;letter-spacing:-0.42px;color:#fff;">OP-CZ-CKOLO</div>
<div class="t w" style="left:265.2px;top:85px;font-size:5.24px;line-height:8px;letter-spacing:-0.09px;color:#fff;">OP České kolo - Velko</div>
<div class="t w" style="left:363.4px;top:85px;font-size:5.24px;line-height:8px;letter-spacing:-0.04px;color:#fff;">Diagnóza potřeby</div>
<div class="t w" style="left:407.4px;top:85px;font-size:5.24px;line-height:8px;letter-spacing:0.03px;color:#fff;">05.12.2007 14:44:58</div>
<div class="t w" style="left:461.2px;top:85px;font-size:5.24px;line-height:8px;letter-spacing:0px;color:#fff;">Aktivní prodej</div>
<div class="t w" style="left:495px;top:85px;font-size:5.24px;line-height:8px;letter-spacing:-0.45px;color:#fff;">CESKOLSIDLO</div>
<div class="t w" style="left:536.3px;top:85px;font-size:5.24px;line-height:8px;letter-spacing:-0.05px;color:#fff;">98756432</div>
<svg width="800" height="500" viewBox="0 0 800 500" style="left:0;top:0"><rect x="264.3" y="93.27" width="142.2" height="8.57" fill="#c0ff80"/></svg>
<div class="t" style="left:224.1px;top:94px;font-size:5.24px;line-height:8px;letter-spacing:-0.36px;color:#2b2b2b;">OP-CZ-VELBIKE</div>
<div class="t" style="left:265.2px;top:94px;font-size:5.24px;line-height:8px;letter-spacing:-0.08px;color:#2b2b2b;">OP Velkoobchod Bikezone - Velko</div>
<div class="t" style="left:363.4px;top:94px;font-size:5.24px;line-height:8px;letter-spacing:-0.19px;color:#2b2b2b;">Realizace</div>
<div class="t" style="left:407.4px;top:94px;font-size:5.24px;line-height:8px;letter-spacing:0.03px;color:#2b2b2b;">05.12.2007 14:44:58</div>
<div class="t" style="left:461.2px;top:94px;font-size:5.24px;line-height:8px;letter-spacing:-0.11px;color:#2b2b2b;">Výstava</div>
<div class="t" style="left:495px;top:94px;font-size:5.24px;line-height:8px;letter-spacing:-0.4px;color:#2b2b2b;">VELBIKE</div>
<div class="t" style="left:536.3px;top:94px;font-size:5.24px;line-height:8px;letter-spacing:-0.05px;color:#2b2b2b;">64634871</div>
<svg width="800" height="500" viewBox="0 0 800 500" style="left:0;top:0"><rect x="223.6" y="101.84" width="327.7" height="8.57" fill="#f1f5fc"/><rect x="264.3" y="101.84" width="142.2" height="8.57" fill="#deffbe"/></svg>
<div class="t" style="left:224.1px;top:102px;font-size:5.24px;line-height:8px;letter-spacing:-0.38px;color:#2b2b2b;">OP-GE-GESIPA</div>
<div class="t" style="left:265.2px;top:102px;font-size:5.24px;line-height:8px;letter-spacing:-0.07px;color:#2b2b2b;">OP Gesipa Vorstellung - Velko</div>
<div class="t" style="left:363.4px;top:102px;font-size:5.24px;line-height:8px;letter-spacing:-0.19px;color:#2b2b2b;">Realizace</div>
<div class="t" style="left:407.4px;top:102px;font-size:5.24px;line-height:8px;letter-spacing:0.03px;color:#2b2b2b;">05.12.2007 14:44:58</div>
<div class="t" style="left:461.2px;top:102px;font-size:5.24px;line-height:8px;letter-spacing:-0.1px;color:#2b2b2b;">Poptávka</div>
<div class="t" style="left:495px;top:102px;font-size:5.24px;line-height:8px;letter-spacing:-0.4px;color:#2b2b2b;">GESIPA</div>
<div class="t" style="left:536.3px;top:102px;font-size:5.24px;line-height:8px;letter-spacing:0.04px;color:#2b2b2b;">81114902</div>
<svg width="800" height="500" viewBox="0 0 800 500" style="left:0;top:0"><rect x="264.3" y="110.41" width="142.2" height="8.57" fill="#c0ff80"/></svg>
<div class="t" style="left:224.1px;top:111px;font-size:5.24px;line-height:8px;letter-spacing:-0.37px;color:#2b2b2b;">OP-SK-DEWAL</div>
<div class="t" style="left:265.2px;top:111px;font-size:5.24px;line-height:8px;letter-spacing:-0.13px;color:#2b2b2b;">OP DEWAL Slovakia - Velko</div>
<div class="t" style="left:363.4px;top:111px;font-size:5.24px;line-height:8px;letter-spacing:-0.11px;color:#2b2b2b;">Dohoda</div>
<div class="t" style="left:407.4px;top:111px;font-size:5.24px;line-height:8px;letter-spacing:0.03px;color:#2b2b2b;">05.12.2007 14:44:58</div>
<div class="t" style="left:461.2px;top:111px;font-size:5.24px;line-height:8px;letter-spacing:-0.09px;color:#2b2b2b;">Doporučení</div>
<div class="t" style="left:495px;top:111px;font-size:5.24px;line-height:8px;letter-spacing:-0.36px;color:#2b2b2b;">DEWALSIDLO</div>
<div class="t" style="left:536.3px;top:111px;font-size:5.24px;line-height:8px;letter-spacing:-0.05px;color:#2b2b2b;">08678145</div>
<svg width="800" height="500" viewBox="0 0 800 500" style="left:0;top:0"><rect x="223.6" y="118.99" width="327.7" height="8.57" fill="#f1f5fc"/><rect x="264.3" y="118.99" width="142.2" height="8.57" fill="#deffbe"/></svg>
<div class="t" style="left:224.1px;top:119px;font-size:5.24px;line-height:8px;letter-spacing:-0.4px;color:#2b2b2b;">OP-CZ-VELOM</div>
<div class="t" style="left:265.2px;top:119px;font-size:5.24px;line-height:8px;letter-spacing:-0.06px;color:#2b2b2b;">OP Velom - Malo, Dodavatel</div>
<div class="t" style="left:363.4px;top:119px;font-size:5.24px;line-height:8px;letter-spacing:-0.02px;color:#2b2b2b;">Kontakt</div>
<div class="t" style="left:407.4px;top:119px;font-size:5.24px;line-height:8px;letter-spacing:0.03px;color:#2b2b2b;">05.12.2007 14:44:58</div>
<div class="t" style="left:461.2px;top:119px;font-size:5.24px;line-height:8px;letter-spacing:0px;color:#2b2b2b;">Aktivní prodej</div>
<div class="t" style="left:495px;top:119px;font-size:5.24px;line-height:8px;letter-spacing:-0.38px;color:#2b2b2b;">D-VELOM</div>
<div class="t" style="left:536.3px;top:119px;font-size:5.24px;line-height:8px;letter-spacing:-0.05px;color:#2b2b2b;">75454263</div>
<svg width="800" height="500" viewBox="0 0 800 500" style="left:0;top:0"><rect x="264.3" y="127.56" width="142.2" height="8.57" fill="#c0ff80"/></svg>
<div class="t" style="left:224.1px;top:128px;font-size:5.24px;line-height:8px;letter-spacing:-0.41px;color:#2b2b2b;">OP-CZ-TESKOL</div>
<div class="t" style="left:265.2px;top:128px;font-size:5.24px;line-height:8px;letter-spacing:-0.22px;color:#2b2b2b;">OP TESKOL - Malo</div>
<div class="t" style="left:363.4px;top:128px;font-size:5.24px;line-height:8px;letter-spacing:-0.02px;color:#2b2b2b;">Kontakt</div>
<div class="t" style="left:407.4px;top:128px;font-size:5.24px;line-height:8px;letter-spacing:0.03px;color:#2b2b2b;">05.12.2007 14:44:58</div>
<div class="t" style="left:461.2px;top:128px;font-size:5.24px;line-height:8px;letter-spacing:-0.11px;color:#2b2b2b;">Výstava</div>
<div class="t" style="left:495px;top:128px;font-size:5.24px;line-height:8px;letter-spacing:-0.5px;color:#2b2b2b;">TESKOL</div>
<div class="t" style="left:536.3px;top:128px;font-size:5.24px;line-height:8px;letter-spacing:-0.05px;color:#2b2b2b;">91230587</div>
<svg width="800" height="500" viewBox="0 0 800 500" style="left:0;top:0"><rect x="223.6" y="136.13" width="327.7" height="8.57" fill="#f1f5fc"/><rect x="264.3" y="136.13" width="142.2" height="8.57" fill="#deffbe"/></svg>
<div class="t" style="left:224.1px;top:137px;font-size:5.24px;line-height:8px;letter-spacing:-0.39px;color:#2b2b2b;">OP-CZ-RFW</div>
<div class="t" style="left:265.2px;top:137px;font-size:5.24px;line-height:8px;letter-spacing:-0.19px;color:#2b2b2b;">OP RFW - Malo</div>
<div class="t" style="left:363.4px;top:137px;font-size:5.24px;line-height:8px;letter-spacing:-0.02px;color:#2b2b2b;">Kontakt</div>
<div class="t" style="left:407.4px;top:137px;font-size:5.24px;line-height:8px;letter-spacing:0.03px;color:#2b2b2b;">05.12.2007 14:44:58</div>
<div class="t" style="left:461.2px;top:137px;font-size:5.24px;line-height:8px;letter-spacing:0px;color:#2b2b2b;">Aktivní prodej</div>
<div class="t" style="left:495px;top:137px;font-size:5.24px;line-height:8px;letter-spacing:-0.38px;color:#2b2b2b;">O-RFW</div>
<div class="t" style="left:536.3px;top:137px;font-size:5.24px;line-height:8px;letter-spacing:-0.05px;color:#2b2b2b;">24356719</div>
<svg width="800" height="500" viewBox="0 0 800 500" style="left:0;top:0"><rect x="264.3" y="144.7" width="142.2" height="8.57" fill="#c0ff80"/></svg>
<div class="t" style="left:224.1px;top:145px;font-size:5.24px;line-height:8px;letter-spacing:-0.4px;color:#2b2b2b;">OP-CZ-EKOTOOL</div>
<div class="t" style="left:265.2px;top:145px;font-size:5.24px;line-height:8px;letter-spacing:-0.23px;color:#2b2b2b;">OP EKOTOOL - Malo</div>
<div class="t" style="left:363.4px;top:145px;font-size:5.24px;line-height:8px;letter-spacing:-0.13px;color:#2b2b2b;">Realizováno</div>
<div class="t" style="left:407.4px;top:145px;font-size:5.24px;line-height:8px;letter-spacing:0.03px;color:#2b2b2b;">12.04.2018 14:05:57</div>
<div class="t" style="left:461.2px;top:145px;font-size:5.24px;line-height:8px;letter-spacing:0px;color:#2b2b2b;">Aktivní prodej</div>
<div class="t" style="left:495px;top:145px;font-size:5.24px;line-height:8px;letter-spacing:-0.46px;color:#2b2b2b;">EKOTOOL</div>
<div class="t" style="left:536.3px;top:145px;font-size:5.24px;line-height:8px;letter-spacing:-0.05px;color:#2b2b2b;">07678324</div>
<svg width="800" height="500" viewBox="0 0 800 500" style="left:0;top:0"><rect x="223.6" y="153.27" width="327.7" height="8.57" fill="#f1f5fc"/><rect x="264.3" y="153.27" width="142.2" height="8.57" fill="#deffbe"/></svg>
<div class="t" style="left:224.1px;top:154px;font-size:5.24px;line-height:8px;letter-spacing:-0.42px;color:#2b2b2b;">OP-CZ-CYKLOD</div>
<div class="t" style="left:265.2px;top:154px;font-size:5.24px;line-height:8px;letter-spacing:-0.07px;color:#2b2b2b;">OP Cyklo doplňky - Malo</div>
<div class="t" style="left:363.4px;top:154px;font-size:5.24px;line-height:8px;letter-spacing:-0.19px;color:#2b2b2b;">Realizace</div>
<div class="t" style="left:407.4px;top:154px;font-size:5.24px;line-height:8px;letter-spacing:0.03px;color:#2b2b2b;">05.12.2007 14:44:58</div>
<div class="t" style="left:461.2px;top:154px;font-size:5.24px;line-height:8px;letter-spacing:0.04px;color:#2b2b2b;">www stránky</div>
<div class="t" style="left:495px;top:154px;font-size:5.24px;line-height:8px;letter-spacing:-0.38px;color:#2b2b2b;">D-CYKLO-C</div>
<div class="t" style="left:536.3px;top:154px;font-size:5.24px;line-height:8px;letter-spacing:-0.05px;color:#2b2b2b;">09845612</div>
<svg width="800" height="500" viewBox="0 0 800 500" style="left:0;top:0"><rect x="264.3" y="161.84" width="142.2" height="8.57" fill="#c0ff80"/></svg>
<div class="t" style="left:224.1px;top:162px;font-size:5.24px;line-height:8px;letter-spacing:-0.41px;color:#2b2b2b;">OP-CZ-BARLAK</div>
<div class="t" style="left:265.2px;top:162px;font-size:5.24px;line-height:8px;letter-spacing:-0.07px;color:#2b2b2b;">OP Barvy-Laky - Dodavatel</div>
<div class="t" style="left:363.4px;top:162px;font-size:5.24px;line-height:8px;letter-spacing:-0.1px;color:#2b2b2b;">Zrušeno</div>
<div class="t" style="left:407.4px;top:162px;font-size:5.24px;line-height:8px;letter-spacing:0.03px;color:#2b2b2b;">01.01.2010 12:23:49</div>
<div class="t" style="left:495px;top:162px;font-size:5.24px;line-height:8px;letter-spacing:-0.5px;color:#2b2b2b;">BARLAK</div>
<div class="t" style="left:536.3px;top:162px;font-size:5.24px;line-height:8px;letter-spacing:-0.05px;color:#2b2b2b;">00876453</div>
<svg width="800" height="500" viewBox="0 0 800 500" style="left:0;top:0"><rect x="223.6" y="170.41" width="327.7" height="8.57" fill="#f1f5fc"/><rect x="264.3" y="170.41" width="142.2" height="8.57" fill="#deffbe"/></svg>
<div class="t" style="left:224.1px;top:171px;font-size:5.24px;line-height:8px;letter-spacing:-0.42px;color:#2b2b2b;">OP-CZ-PAPYR</div>
<div class="t" style="left:265.2px;top:171px;font-size:5.24px;line-height:8px;letter-spacing:-0.09px;color:#2b2b2b;">OP Papyrus - Dodavatel</div>
<div class="t" style="left:363.4px;top:171px;font-size:5.24px;line-height:8px;letter-spacing:-0.1px;color:#2b2b2b;">Zrušeno</div>
<div class="t" style="left:407.4px;top:171px;font-size:5.24px;line-height:8px;letter-spacing:0.03px;color:#2b2b2b;">01.01.2010 12:26:18</div>
<div class="t" style="left:495px;top:171px;font-size:5.24px;line-height:8px;letter-spacing:-0.54px;color:#2b2b2b;">PAPYR</div>
<div class="t" style="left:536.3px;top:171px;font-size:5.24px;line-height:8px;letter-spacing:-0.05px;color:#2b2b2b;">33550978</div>
<svg width="800" height="500" viewBox="0 0 800 500" style="left:0;top:0"><rect x="264.3" y="178.99" width="142.2" height="8.57" fill="#c0ff80"/></svg>
<div class="t" style="left:224.1px;top:179px;font-size:5.24px;line-height:8px;letter-spacing:-0.43px;color:#2b2b2b;">OP-CZ-PROOBAL</div>
<div class="t" style="left:265.2px;top:179px;font-size:5.24px;line-height:8px;letter-spacing:-0.18px;color:#2b2b2b;">OP PRO-OBAL - Dodavatel</div>
<div class="t" style="left:363.4px;top:179px;font-size:5.24px;line-height:8px;letter-spacing:-0.1px;color:#2b2b2b;">Zrušeno</div>
<div class="t" style="left:407.4px;top:179px;font-size:5.24px;line-height:8px;letter-spacing:0.03px;color:#2b2b2b;">01.01.2010 12:27:50</div>
<div class="t" style="left:495px;top:179px;font-size:5.24px;line-height:8px;letter-spacing:-0.53px;color:#2b2b2b;">PROOBAL</div>
<div class="t" style="left:536.3px;top:179px;font-size:5.24px;line-height:8px;letter-spacing:-0.05px;color:#2b2b2b;">45124836</div>
<svg width="800" height="500" viewBox="0 0 800 500" style="left:0;top:0"><rect x="223.6" y="187.56" width="327.7" height="8.57" fill="#f1f5fc"/><rect x="264.3" y="187.56" width="142.2" height="8.57" fill="#deffbe"/></svg>
<div class="t" style="left:224.1px;top:188px;font-size:5.24px;line-height:8px;letter-spacing:-0.38px;color:#2b2b2b;">OP-JP-TOMEN</div>
<div class="t" style="left:265.2px;top:188px;font-size:5.24px;line-height:8px;letter-spacing:-0.01px;color:#2b2b2b;">OP Tomen Industries - Dodavatel</div>
<div class="t" style="left:363.4px;top:188px;font-size:5.24px;line-height:8px;letter-spacing:-0.19px;color:#2b2b2b;">Realizace</div>
<div class="t" style="left:407.4px;top:188px;font-size:5.24px;line-height:8px;letter-spacing:0.03px;color:#2b2b2b;">01.01.2010 12:29:05</div>
<div class="t" style="left:495px;top:188px;font-size:5.24px;line-height:8px;letter-spacing:-0.44px;color:#2b2b2b;">TOMEN</div>
<svg width="800" height="500" viewBox="0 0 800 500" style="left:0;top:0"><rect x="264.3" y="196.13" width="142.2" height="8.57" fill="#c0ff80"/></svg>
<div class="t" style="left:224.1px;top:197px;font-size:5.24px;line-height:8px;letter-spacing:-0.4px;color:#2b2b2b;">OP-CZ-TECHN</div>
<div class="t" style="left:265.2px;top:197px;font-size:5.24px;line-height:8px;letter-spacing:-0.21px;color:#2b2b2b;">OP TECHNOPLYN - Dodavatel</div>
<div class="t" style="left:363.4px;top:197px;font-size:5.24px;line-height:8px;letter-spacing:-0.19px;color:#2b2b2b;">Realizace</div>
<div class="t" style="left:407.4px;top:197px;font-size:5.24px;line-height:8px;letter-spacing:0.03px;color:#2b2b2b;">01.01.2010 12:30:08</div>
<div class="t" style="left:495px;top:197px;font-size:5.24px;line-height:8px;letter-spacing:-0.49px;color:#2b2b2b;">TECHN</div>
<div class="t" style="left:536.3px;top:197px;font-size:5.24px;line-height:8px;letter-spacing:-0.05px;color:#2b2b2b;">76565210</div>
<svg width="800" height="500" viewBox="0 0 800 500" style="left:0;top:0"><rect x="223.6" y="204.7" width="327.7" height="8.57" fill="#f1f5fc"/><rect x="264.3" y="204.7" width="142.2" height="8.57" fill="#deffbe"/></svg>
<div class="t" style="left:224.1px;top:205px;font-size:5.24px;line-height:8px;letter-spacing:-0.38px;color:#2b2b2b;">OP-CZ-ALKAN</div>
<div class="t" style="left:265.2px;top:205px;font-size:5.24px;line-height:8px;letter-spacing:-0.09px;color:#2b2b2b;">OP Alconn Czech - Dodavatel</div>
<div class="t" style="left:363.4px;top:205px;font-size:5.24px;line-height:8px;letter-spacing:-0.06px;color:#2b2b2b;">Vyjednávání</div>
<div class="t" style="left:407.4px;top:205px;font-size:5.24px;line-height:8px;letter-spacing:0.03px;color:#2b2b2b;">01.01.2010 12:38:31</div>
<div class="t" style="left:495px;top:205px;font-size:5.24px;line-height:8px;letter-spacing:-0.45px;color:#2b2b2b;">ALKAN</div>
<div class="t" style="left:536.3px;top:205px;font-size:5.24px;line-height:8px;letter-spacing:-0.05px;color:#2b2b2b;">76576394</div>
<svg width="800" height="500" viewBox="0 0 800 500" style="left:0;top:0"><rect x="264.3" y="213.27" width="142.2" height="8.57" fill="#c0ff80"/></svg>
<div class="t" style="left:224.1px;top:214px;font-size:5.24px;line-height:8px;letter-spacing:-0.44px;color:#2b2b2b;">OP-CZ-FESKO</div>
<div class="t" style="left:265.2px;top:214px;font-size:5.24px;line-height:8px;letter-spacing:-0.14px;color:#2b2b2b;">OP Fesko - Malo</div>
<div class="t" style="left:363.4px;top:214px;font-size:5.24px;line-height:8px;letter-spacing:-0.19px;color:#2b2b2b;">Realizace</div>
<div class="t" style="left:407.4px;top:214px;font-size:5.24px;line-height:8px;letter-spacing:0.05px;color:#2b2b2b;">07.12.2012 11:12:46</div>
<div class="t" style="left:461.2px;top:214px;font-size:5.24px;line-height:8px;letter-spacing:-0.1px;color:#2b2b2b;">Poptávka</div>
<div class="t" style="left:495px;top:214px;font-size:5.24px;line-height:8px;letter-spacing:-0.46px;color:#2b2b2b;">O-FESKO</div>
<div class="t" style="left:536.3px;top:214px;font-size:5.24px;line-height:8px;letter-spacing:-0.05px;color:#2b2b2b;">76565210</div>
<svg width="800" height="500" viewBox="0 0 800 500" style="left:0;top:0"><rect x="223.6" y="221.84" width="327.7" height="8.57" fill="#f1f5fc"/><rect x="264.3" y="221.84" width="142.2" height="8.57" fill="#deffbe"/></svg>
<div class="t" style="left:224.1px;top:222px;font-size:5.24px;line-height:8px;letter-spacing:-0.45px;color:#2b2b2b;">QWERTZ</div>
<div class="t" style="left:265.2px;top:222px;font-size:5.24px;line-height:8px;letter-spacing:-0.08px;color:#2b2b2b;">Realizace generálního obchodního případu</div>
<div class="t" style="left:363.4px;top:222px;font-size:5.24px;line-height:8px;letter-spacing:-0.02px;color:#2b2b2b;">Kontakt</div>
<div class="t" style="left:407.4px;top:222px;font-size:5.24px;line-height:8px;letter-spacing:0.03px;color:#2b2b2b;">10.05.2018 15:16:41</div>
<svg width="800" height="500" viewBox="0 0 800 500" style="left:0;top:0"><rect x="264.3" y="230.41" width="142.2" height="8.57" fill="#c0ff80"/></svg>
<div class="t" style="left:224.1px;top:231px;font-size:5.24px;line-height:8px;letter-spacing:-0.38px;color:#2b2b2b;">OP-CZ-CKOLO-K</div>
<div class="t" style="left:265.2px;top:231px;font-size:5.24px;line-height:8px;letter-spacing:-0.07px;color:#2b2b2b;">OP České kolo - Velko - Kopie</div>
<div class="t" style="left:363.4px;top:231px;font-size:5.24px;line-height:8px;letter-spacing:-0.04px;color:#2b2b2b;">Diagnóza potřeby</div>
<div class="t" style="left:407.4px;top:231px;font-size:5.24px;line-height:8px;letter-spacing:0.03px;color:#2b2b2b;">30.05.2018 14:09:59</div>
<div class="t" style="left:495px;top:231px;font-size:5.24px;line-height:8px;letter-spacing:-0.45px;color:#2b2b2b;">CESKOLSIDLO</div>
<div class="t" style="left:536.3px;top:231px;font-size:5.24px;line-height:8px;letter-spacing:-0.05px;color:#2b2b2b;">98756432</div>
<svg width="800" height="500" viewBox="0 0 800 500" style="left:0;top:0"><rect x="223.6" y="238.99" width="327.7" height="8.57" fill="#f1f5fc"/></svg>
<div class="t" style="left:224.1px;top:239px;font-size:5.24px;line-height:8px;letter-spacing:-0.34px;color:#2b2b2b;">OP-CZ-VELBIKE-K</div>
<div class="t" style="left:224.1px;top:248px;font-size:5.24px;line-height:8px;letter-spacing:-0.35px;color:#2b2b2b;">OP-GE-GESIPA-K</div>
<svg width="800" height="500" viewBox="0 0 800 500" style="left:0;top:0"><rect x="223.6" y="256.13" width="327.7" height="8.57" fill="#f1f5fc"/></svg>
<div class="t" style="left:224.1px;top:257px;font-size:5.24px;line-height:8px;letter-spacing:-0.34px;color:#2b2b2b;">OP-SK-DEWAL-K</div>
<div class="t" style="left:224.1px;top:265px;font-size:5.24px;line-height:8px;letter-spacing:-0.37px;color:#2b2b2b;">OP-CZ-VELOM-K</div>
<svg width="800" height="500" viewBox="0 0 800 500" style="left:0;top:0"><rect x="223.6" y="273.27" width="327.7" height="8.57" fill="#f1f5fc"/></svg>
<div class="t" style="left:224.1px;top:274px;font-size:5.24px;line-height:8px;letter-spacing:-0.38px;color:#2b2b2b;">OP-CZ-TESKOL-K</div>
<div class="t" style="left:224.1px;top:282px;font-size:5.24px;line-height:8px;letter-spacing:-0.34px;color:#2b2b2b;">OP-CZ-RFW-K</div>
<svg width="800" height="500" viewBox="0 0 800 500" style="left:0;top:0"><rect x="223.6" y="290.41" width="327.7" height="8.57" fill="#f1f5fc"/></svg>
<div class="t" style="left:224.1px;top:291px;font-size:5.24px;line-height:8px;letter-spacing:-0.58px;color:#2b2b2b;">OP-CZ-EKOTOOL-K</div>
<div class="t" style="left:224.1px;top:299px;font-size:5.24px;line-height:8px;letter-spacing:-0.38px;color:#2b2b2b;">OP-CZ-CYKLOD-K</div>
<svg width="800" height="500" viewBox="0 0 800 500" style="left:0;top:0"><rect x="223.6" y="307.56" width="327.7" height="8.57" fill="#f1f5fc"/></svg>
<div class="t" style="left:224.1px;top:308px;font-size:5.24px;line-height:8px;letter-spacing:-0.38px;color:#2b2b2b;">OP-CZ-BARLAK-K</div>
<div class="t" style="left:224.1px;top:317px;font-size:5.24px;line-height:8px;letter-spacing:-0.38px;color:#2b2b2b;">OP-CZ-PAPYR-K</div>
<svg width="800" height="500" viewBox="0 0 800 500" style="left:0;top:0"><rect x="223.6" y="324.7" width="327.7" height="8.57" fill="#f1f5fc"/></svg>
<div class="t" style="left:224.1px;top:325px;font-size:5.24px;line-height:8px;letter-spacing:-0.59px;color:#2b2b2b;">OP-CZ-PROOBAL-K</div>
<div class="t" style="left:224.1px;top:334px;font-size:5.24px;line-height:8px;letter-spacing:-0.35px;color:#2b2b2b;">OP-JP-TOMEN-K</div>
<svg width="800" height="500" viewBox="0 0 800 500" style="left:0;top:0"><rect x="223.6" y="341.84" width="327.7" height="8.57" fill="#f1f5fc"/></svg>
<div class="t" style="left:224.1px;top:342px;font-size:5.24px;line-height:8px;letter-spacing:-0.36px;color:#2b2b2b;">OP-CZ-TECHN-K</div>
<div class="t" style="left:224.1px;top:351px;font-size:5.24px;line-height:8px;letter-spacing:-0.35px;color:#2b2b2b;">OP-CZ-ALKAN-K</div>
<svg width="800" height="500" viewBox="0 0 800 500" style="left:0;top:0"><rect x="551.3" y="67.3" width="8.2" height="304.3" fill="#fff"/><rect x="551.3" y="76.2" width="8.2" height="136.4" fill="#d5e3f2"/><rect x="551.3" y="212.6" width="8.2" height="150.2" fill="#eff4fa"/><rect x="223.6" y="362.9" width="335.7" height="8.6" fill="#eff4fa"/><rect x="231.4" y="362.9" width="8.2" height="8.6" fill="#d5e3f2"/><rect x="223.2" y="376.4" width="5.9" height="6" fill="#fff"/><path d="M223.2 376.9H229.1M223.2 381.9H229.1M223.7 376.4V382.4M228.6 376.4V382.4" stroke="#b9c0c8" stroke-width="1" fill="none"/></svg>
<div class="t" style="left:231px;top:375px;font-size:5.24px;line-height:8px;letter-spacing:-0.06px;color:#333;">Nesledovať zmeny</div>
<svg width="800" height="500" viewBox="0 0 800 500" style="left:0;top:0"><rect x="571.8" y="59.1" width="61.2" height="10.5" fill="#4b86b8"/></svg>
<div class="t w" style="left:590.72px;top:60px;font-size:5.24px;line-height:8px;letter-spacing:-0.14px;color:#e3edf7;">Poznámky</div>
<svg width="800" height="500" viewBox="0 0 800 500" style="left:0;top:0"><rect x="571.8" y="72.45" width="61.2" height="10.5" fill="#4b86b8"/></svg>
<div class="t w" style="left:594.62px;top:74px;font-size:5.24px;line-height:8px;letter-spacing:-0.11px;color:#e3edf7;">Prílohy</div>
<svg width="800" height="500" viewBox="0 0 800 500" style="left:0;top:0"><rect x="571.8" y="85.8" width="61.2" height="10.5" fill="#4b86b8"/></svg>
<div class="t w" style="left:580.09px;top:87px;font-size:5.24px;line-height:8px;letter-spacing:-0.04px;color:#e3edf7;">Elektronické správy</div>
<svg width="800" height="500" viewBox="0 0 800 500" style="left:0;top:0"><rect x="571.8" y="99.15" width="61.2" height="10.5" fill="#4b86b8"/></svg>
<div class="t w" style="left:583.55px;top:100px;font-size:5.24px;line-height:8px;letter-spacing:-0.03px;color:#e3edf7;">Súhrn informácií</div>
<svg width="800" height="500" viewBox="0 0 800 500" style="left:0;top:0"><rect x="571.8" y="112.5" width="61.2" height="10.5" fill="#4b86b8"/></svg>
<div class="t w" style="left:581.54px;top:114px;font-size:5.24px;line-height:8px;letter-spacing:-0.01px;color:#e3edf7;">Obchodný partner</div>
<svg width="800" height="500" viewBox="0 0 800 500" style="left:0;top:0"><rect x="571.8" y="125.85" width="61.2" height="10.5" fill="#4b86b8"/></svg>
<div class="t w" style="left:588.24px;top:127px;font-size:5.24px;line-height:8px;letter-spacing:-0.07px;color:#e3edf7;">Konkurencia</div>
<svg width="800" height="500" viewBox="0 0 800 500" style="left:0;top:0"><rect x="571.8" y="139.2" width="61.2" height="10.5" fill="#4b86b8"/></svg>
<div class="t w" style="left:587.98px;top:140px;font-size:5.24px;line-height:8px;letter-spacing:-0.04px;color:#e3edf7;">Hodnotenie</div>
<svg width="800" height="500" viewBox="0 0 800 500" style="left:0;top:0"><rect x="571.8" y="152.55" width="61.2" height="10.5" fill="#4b86b8"/></svg>
<div class="t w" style="left:585.88px;top:154px;font-size:5.24px;line-height:8px;letter-spacing:-0.1px;color:#e3edf7;">Členenie akcie</div>
<svg width="800" height="500" viewBox="0 0 800 500" style="left:0;top:0"><rect x="571.8" y="165.9" width="61.2" height="10.5" fill="#4b86b8"/></svg>
<div class="t w" style="left:581.61px;top:167px;font-size:5.24px;line-height:8px;letter-spacing:-0.08px;color:#e3edf7;">Podriadené akcie</div>
<svg width="800" height="500" viewBox="0 0 800 500" style="left:0;top:0"><rect x="571.8" y="179.25" width="61.2" height="10.5" fill="#4b86b8"/></svg>
<div class="t w" style="left:581.36px;top:180px;font-size:5.24px;line-height:8px;letter-spacing:-0.07px;color:#e3edf7;">Nadriadená akcia</div>
<svg width="800" height="500" viewBox="0 0 800 500" style="left:0;top:0"><rect x="571.8" y="192.6" width="61.2" height="10.5" fill="#4b86b8"/></svg>
<div class="t w" style="left:585.16px;top:194px;font-size:5.24px;line-height:8px;letter-spacing:-0.11px;color:#e3edf7;">Súvisiace akcie</div>
<svg width="800" height="500" viewBox="0 0 800 500" style="left:0;top:0"><rect x="571.8" y="205.95" width="61.2" height="10.5" fill="#4b86b8"/></svg>
<div class="t w" style="left:585.17px;top:207px;font-size:5.24px;line-height:8px;letter-spacing:-0.1px;color:#e3edf7;">Rozpočet akcie</div>
<svg width="800" height="500" viewBox="0 0 800 500" style="left:0;top:0"><rect x="571.8" y="219.3" width="61.2" height="10.5" fill="#4b86b8"/></svg>
<div class="t w" style="left:591.97px;top:221px;font-size:5.24px;line-height:8px;letter-spacing:-0.07px;color:#e3edf7;">Doklady</div>
<svg width="800" height="500" viewBox="0 0 800 500" style="left:0;top:0"><rect x="571.8" y="232.65" width="61.2" height="10.5" fill="#4b86b8"/></svg>
<div class="t w" style="left:593.62px;top:234px;font-size:5.24px;line-height:8px;letter-spacing:-0.11px;color:#e3edf7;">Analýzy</div>
<svg width="800" height="500" viewBox="0 0 800 500" style="left:0;top:0;font-family:'Liberation Sans',sans-serif"><path d="M214.6 38.4H217.4L219.6 40.6V43.6H214.6Z" fill="#fbfbfb"/><path d="M216 42.4L218.6 41" stroke="#cfcfcf" stroke-width=".6"/><path d="M604.4 41.6H608.4" stroke="#444" stroke-width=".7"/><rect x="615.8" y="39.4" width="4.2" height="4" fill="none" stroke="#333" stroke-width=".7"/><path d="M627.9 39.5L631.9 43.5M631.9 39.5L627.9 43.5" stroke="#111" stroke-width="1"/><path d="M553.6 72.4L555.4 70.6L557.2 72.4" fill="none" stroke="#1a1a1a" stroke-width="1.1"/><path d="M228.2 365.5L226.5 367.2L228.2 368.9" fill="none" stroke="#1a1a1a" stroke-width="1.1"/><path d="M628 142.65L630 144.45L628 146.25Z" fill="#fff"/><path d="M628 169.35L630 171.15L628 172.95Z" fill="#fff"/><path d="M628 182.7L630 184.5L628 186.3Z" fill="#fff"/><path d="M628 222.75L630 224.55L628 226.35Z" fill="#fff"/></svg>
<svg width="800" height="500" viewBox="0 0 800 500" style="left:0;top:0"><rect x="248.4" y="234.3" width="460.7" height="196.7" fill="#fff"/><rect x="248.4" y="234.3" width="460.7" height="13.2" fill="#1b4568"/><rect x="248.4" y="247.5" width="0.7" height="183.5" fill="#b9cfe6"/></svg>
<div class="t w" style="left:260.6px;top:236px;font-size:6.2px;line-height:9px;letter-spacing:-0.25px;color:#fff;font-weight:bold;">Realizačný tím akcie</div>
<div class="t w" style="left:666.24px;top:237px;font-size:5.6px;line-height:8px;color:#fff;font-weight:bold;">3</div>
<svg width="800" height="500" viewBox="0 0 800 500" style="left:0;top:0"><rect x="254" y="251.2" width="383" height="103.4" fill="#f8fbff"/><path d="M254 251.7H637M254 354.1H637M254.5 251.2V354.6M636.5 251.2V354.6" stroke="#e2ebf8" stroke-width="1" fill="none"/><rect x="258.4" y="256.1" width="374.1" height="81.5" fill="#f9fbff"/><path d="M258.4 256.6H632.5M258.4 337.1H632.5M258.9 256.1V337.6M632 256.1V337.6" stroke="#dfe9f6" stroke-width="1" fill="none"/><rect x="258.4" y="256.1" width="366" height="16.9" fill="url(#g0)"/><rect x="309" y="256.6" width="0.6" height="16.4" fill="#dde7f5"/><rect x="334" y="256.6" width="0.6" height="16.4" fill="#dde7f5"/><rect x="362.8" y="256.6" width="0.6" height="16.4" fill="#dde7f5"/><rect x="403.7" y="256.6" width="0.6" height="16.4" fill="#dde7f5"/><rect x="423.7" y="256.6" width="0.6" height="16.4" fill="#dde7f5"/><rect x="468.2" y="256.6" width="0.6" height="16.4" fill="#dde7f5"/><rect x="489.7" y="256.6" width="0.6" height="16.4" fill="#dde7f5"/><rect x="523.2" y="256.6" width="0.6" height="16.4" fill="#dde7f5"/><rect x="563.5" y="256.6" width="0.6" height="16.4" fill="#dde7f5"/><rect x="624.1" y="256.6" width="0.6" height="16.4" fill="#dde7f5"/></svg>
<div class="t" style="left:259.9px;top:257px;font-size:5.24px;line-height:8px;letter-spacing:-0.16px;color:#2f3238;">Celé meno</div>
<div class="t" style="left:310.8px;top:257px;font-size:5.24px;line-height:8px;letter-spacing:0.01px;color:#2f3238;">Titul pred</div>
<div class="t" style="left:310.8px;top:263px;font-size:5.24px;line-height:8px;letter-spacing:-0.03px;color:#2f3238;">menom</div>
<div class="t" style="left:335.8px;top:257px;font-size:5.24px;line-height:8px;letter-spacing:-0.14px;color:#2f3238;">Meno</div>
<div class="t" style="left:364.6px;top:257px;font-size:5.24px;line-height:8px;letter-spacing:-0.15px;color:#2f3238;">Priezvisko</div>
<div class="t" style="left:405.5px;top:257px;font-size:5.24px;line-height:8px;letter-spacing:-0.16px;color:#2f3238;">Kód roli</div>
<div class="t" style="left:405.5px;top:263px;font-size:5.24px;line-height:8px;letter-spacing:0.02px;color:#2f3238;">v tíme</div>
<div class="t" style="left:425.5px;top:257px;font-size:5.24px;line-height:8px;letter-spacing:-0.1px;color:#2f3238;">Názov roli v tíme</div>
<div class="t" style="left:470px;top:257px;font-size:5.24px;line-height:8px;letter-spacing:-0.14px;color:#2f3238;">Pohlavie</div>
<div class="t" style="left:491.5px;top:257px;font-size:5.24px;line-height:8px;letter-spacing:-0.1px;color:#2f3238;">Obchodný</div>
<div class="t" style="left:491.5px;top:263px;font-size:5.24px;line-height:8px;letter-spacing:0.04px;color:#2f3238;">partner</div>
<div class="t" style="left:525px;top:257px;font-size:5.24px;line-height:8px;letter-spacing:0.04px;color:#2f3238;">Telefón</div>
<div class="t" style="left:565.3px;top:257px;font-size:5.24px;line-height:8px;letter-spacing:-0.28px;color:#2f3238;">Email</div>
<svg width="800" height="500" viewBox="0 0 800 500" style="left:0;top:0"><rect x="258.4" y="273" width="366" height="8.57" fill="#074872"/><rect x="309" y="273" width="0.6" height="8.57" fill="#5f8db0"/><rect x="334" y="273" width="0.6" height="8.57" fill="#5f8db0"/><rect x="362.8" y="273" width="0.6" height="8.57" fill="#5f8db0"/><rect x="403.7" y="273" width="0.6" height="8.57" fill="#5f8db0"/><rect x="423.7" y="273" width="0.6" height="8.57" fill="#5f8db0"/><rect x="468.2" y="273" width="0.6" height="8.57" fill="#5f8db0"/><rect x="489.7" y="273" width="0.6" height="8.57" fill="#5f8db0"/><rect x="523.2" y="273" width="0.6" height="8.57" fill="#5f8db0"/><rect x="563.5" y="273" width="0.6" height="8.57" fill="#5f8db0"/><path d="M424 273.5H468.5M424 281.07H468.5M424.5 273V281.57M468 273V281.57" stroke="#d8485a" stroke-width="1" fill="none"/></svg>
<div class="t w" style="left:259.3px;top:274px;font-size:5.24px;line-height:8px;letter-spacing:0px;color:#fff;">Bedřich Igor</div>
<div class="t w" style="left:310.2px;top:274px;font-size:5.24px;line-height:8px;letter-spacing:0.14px;color:#fff;">Ing.</div>
<div class="t w" style="left:335.2px;top:274px;font-size:5.24px;line-height:8px;letter-spacing:0.12px;color:#fff;">Igor</div>
<div class="t w" style="left:364px;top:274px;font-size:5.24px;line-height:8px;letter-spacing:-0.1px;color:#fff;">Bedřich</div>
<div class="t w" style="left:404.9px;top:274px;font-size:5.24px;line-height:8px;letter-spacing:-0.49px;color:#fff;">OBM</div>
<div class="t w" style="left:424.9px;top:274px;font-size:5.24px;line-height:8px;letter-spacing:-0.09px;color:#fff;">Obchodní manažer</div>
<div class="t w" style="left:469.4px;top:274px;font-size:5.24px;line-height:8px;letter-spacing:-0.24px;color:#fff;">Muž</div>
<div class="t w" style="left:490.9px;top:274px;font-size:5.24px;line-height:8px;letter-spacing:0.01px;color:#fff;">Bikenet s.r.o.</div>
<div class="t w" style="left:524.4px;top:274px;font-size:5.24px;line-height:8px;letter-spacing:0.04px;color:#fff;">+420721123456</div>
<div class="t w" style="left:564.7px;top:274px;font-size:5.24px;line-height:8px;letter-spacing:-0.04px;color:#fff;">igor.bedrich@tiscali.cz</div>
<svg width="800" height="500" viewBox="0 0 800 500" style="left:0;top:0"><rect x="258.8" y="281.57" width="365.6" height="8.57" fill="#fff"/><rect x="258.8" y="281.57" width="75.5" height="8.57" fill="#ccddff"/><rect x="363.1" y="281.57" width="40.9" height="8.57" fill="#c0ff80"/><rect x="468.5" y="281.57" width="21.5" height="8.57" fill="#ccddff"/></svg>
<div class="t" style="left:259.3px;top:282px;font-size:5.24px;line-height:8px;letter-spacing:-0.11px;color:#2b2b2b;">Kaláb Michal</div>
<div class="t" style="left:335.2px;top:282px;font-size:5.24px;line-height:8px;letter-spacing:-0.12px;color:#2b2b2b;">Michal</div>
<div class="t" style="left:364px;top:282px;font-size:5.24px;line-height:8px;letter-spacing:-0.16px;color:#2b2b2b;">Kaláb</div>
<div class="t" style="left:404.9px;top:282px;font-size:5.24px;line-height:8px;letter-spacing:-0.55px;color:#2b2b2b;">TEC</div>
<div class="t" style="left:424.9px;top:282px;font-size:5.24px;line-height:8px;letter-spacing:-0.01px;color:#2b2b2b;">Technolog</div>
<div class="t" style="left:469.4px;top:282px;font-size:5.24px;line-height:8px;letter-spacing:-0.24px;color:#2b2b2b;">Muž</div>
<div class="t" style="left:490.9px;top:282px;font-size:5.24px;line-height:8px;letter-spacing:0.01px;color:#2b2b2b;">Bikenet s.r.o.</div>
<div class="t" style="left:564.7px;top:282px;font-size:5.24px;line-height:8px;letter-spacing:-0.11px;color:#2b2b2b;">kalab@qi.cz</div>
<svg width="800" height="500" viewBox="0 0 800 500" style="left:0;top:0"><rect x="258.8" y="290.14" width="365.6" height="8.57" fill="#fff"/><rect x="258.8" y="290.14" width="75.5" height="8.57" fill="#e1ebff"/><rect x="363.1" y="290.14" width="40.9" height="8.57" fill="#deffbe"/><rect x="468.5" y="290.14" width="21.5" height="8.57" fill="#e1ebff"/></svg>
<div class="t" style="left:259.3px;top:291px;font-size:5.24px;line-height:8px;letter-spacing:-0.11px;color:#2b2b2b;">Růžičková Petra</div>
<div class="t" style="left:310.2px;top:291px;font-size:5.24px;line-height:8px;letter-spacing:0.14px;color:#2b2b2b;">Ing.</div>
<div class="t" style="left:335.2px;top:291px;font-size:5.24px;line-height:8px;letter-spacing:-0.12px;color:#2b2b2b;">Petra</div>
<div class="t" style="left:364px;top:291px;font-size:5.24px;line-height:8px;letter-spacing:-0.15px;color:#2b2b2b;">Růžičková</div>
<div class="t" style="left:404.9px;top:291px;font-size:5.24px;line-height:8px;letter-spacing:-0.18px;color:#2b2b2b;">FIN</div>
<div class="t" style="left:424.9px;top:291px;font-size:5.24px;line-height:8px;letter-spacing:-0.08px;color:#2b2b2b;">Finanční účetní</div>
<div class="t" style="left:469.4px;top:291px;font-size:5.24px;line-height:8px;letter-spacing:-0.17px;color:#2b2b2b;">Žena</div>
<div class="t" style="left:490.9px;top:291px;font-size:5.24px;line-height:8px;letter-spacing:0.01px;color:#2b2b2b;">Bikenet s.r.o.</div>
<div class="t" style="left:524.4px;top:291px;font-size:5.24px;line-height:8px;letter-spacing:0.01px;color:#2b2b2b;">+420723364642</div>
<div class="t" style="left:564.7px;top:291px;font-size:5.24px;line-height:8px;letter-spacing:-0.06px;color:#2b2b2b;">petra.ruzickova@email.cz</div>
<svg width="800" height="500" viewBox="0 0 800 500" style="left:0;top:0"><rect x="624.4" y="256.5" width="8" height="72.4" fill="#fff"/><rect x="624.4" y="264.3" width="8" height="34" fill="#d5e3f2"/><rect x="624.4" y="298.3" width="8" height="30.6" fill="#eff4fa"/><rect x="258.8" y="329" width="365.6" height="8.2" fill="#eff4fa"/><rect x="266.9" y="329" width="7.8" height="8.2" fill="#d5e3f2"/><rect x="616" y="329" width="16.2" height="8.2" fill="#fff"/><rect x="258.4" y="344.3" width="5.9" height="5.8" fill="#fff"/><path d="M258.4 344.8H264.3M258.4 349.6H264.3M258.9 344.3V350.1M263.8 344.3V350.1" stroke="#b9c0c8" stroke-width="1" fill="none"/></svg>
<div class="t" style="left:266.1px;top:343px;font-size:5.24px;line-height:8px;letter-spacing:-0.04px;color:#333;">Povoliť viacnásobnú účasť</div>
<svg width="800" height="500" viewBox="0 0 800 500" style="left:0;top:0"><rect x="254" y="359.3" width="383" height="66.3" fill="#f8fbff"/><path d="M254 359.8H637M254 425.1H637M254.5 359.3V425.6M636.5 359.3V425.6" stroke="#e2ebf8" stroke-width="1" fill="none"/></svg>
<div class="t" style="left:257.2px;top:362px;font-size:5.24px;line-height:8px;letter-spacing:-0.23px;color:#333;">Poznámka</div>
<svg width="800" height="500" viewBox="0 0 800 500" style="left:0;top:0"><rect x="258.4" y="371.3" width="374" height="49.9" fill="#fff"/><path d="M258.4 371.8H632.4M258.4 420.7H632.4M258.9 371.3V421.2M631.9 371.3V421.2" stroke="#dfe9f6" stroke-width="1" fill="none"/><rect x="258.9" y="371.8" width="373" height="11.8" fill="#eaf0f9"/><rect x="269.8" y="372.6" width="356" height="8" fill="#fff"/><rect x="269.3" y="371.8" width="0.6" height="49" fill="#d3e0f2"/></svg>
<div class="t" style="left:288.8px;top:372px;font-size:6.19px;line-height:9px;color:#43303a;">1</div>
<div class="t" style="left:306.78px;top:372px;font-size:6.19px;line-height:9px;color:#43303a;">2</div>
<div class="t" style="left:324.75px;top:372px;font-size:6.19px;line-height:9px;color:#43303a;">3</div>
<div class="t" style="left:342.73px;top:372px;font-size:6.19px;line-height:9px;color:#43303a;">4</div>
<div class="t" style="left:360.7px;top:372px;font-size:6.19px;line-height:9px;color:#43303a;">5</div>
<div class="t" style="left:378.68px;top:372px;font-size:6.19px;line-height:9px;color:#43303a;">6</div>
<div class="t" style="left:396.65px;top:372px;font-size:6.19px;line-height:9px;color:#43303a;">7</div>
<div class="t" style="left:414.63px;top:372px;font-size:6.19px;line-height:9px;color:#43303a;">8</div>
<div class="t" style="left:432.6px;top:372px;font-size:6.19px;line-height:9px;color:#43303a;">9</div>
<div class="t" style="left:448.92px;top:372px;font-size:6.19px;line-height:9px;letter-spacing:-0.06px;color:#43303a;">10</div>
<div class="t" style="left:466.9px;top:372px;font-size:6.19px;line-height:9px;letter-spacing:0.17px;color:#43303a;">11</div>
<div class="t" style="left:484.87px;top:372px;font-size:6.19px;line-height:9px;letter-spacing:-0.06px;color:#43303a;">12</div>
<div class="t" style="left:502.85px;top:372px;font-size:6.19px;line-height:9px;letter-spacing:-0.06px;color:#43303a;">13</div>
<div class="t" style="left:520.82px;top:372px;font-size:6.19px;line-height:9px;letter-spacing:-0.06px;color:#43303a;">14</div>
<div class="t" style="left:538.8px;top:372px;font-size:6.19px;line-height:9px;letter-spacing:-0.06px;color:#43303a;">15</div>
<div class="t" style="left:556.77px;top:372px;font-size:6.19px;line-height:9px;letter-spacing:-0.06px;color:#43303a;">16</div>
<div class="t" style="left:574.75px;top:372px;font-size:6.19px;line-height:9px;letter-spacing:-0.06px;color:#43303a;">17</div>
<div class="t" style="left:592.72px;top:372px;font-size:6.19px;line-height:9px;letter-spacing:-0.06px;color:#43303a;">18</div>
<div class="t" style="left:610.7px;top:372px;font-size:6.19px;line-height:9px;letter-spacing:-0.06px;color:#43303a;">19</div>
<svg width="800" height="500" viewBox="0 0 800 500" style="left:0;top:0"><rect x="643" y="251.6" width="60.9" height="10.2" fill="#4b86b8"/></svg>
<div class="t w" style="left:654.07px;top:253px;font-size:5.24px;line-height:8px;letter-spacing:-0.04px;color:#e3edf7;">Úloha člena tímu</div>
<svg width="800" height="500" viewBox="0 0 800 500" style="left:0;top:0"><rect x="643" y="264.93" width="60.9" height="10.2" fill="#4b86b8"/></svg>
<div class="t w" style="left:652.59px;top:266px;font-size:5.24px;line-height:8px;letter-spacing:-0.01px;color:#e3edf7;">Obchodný partner</div>
<svg width="800" height="500" viewBox="0 0 800 500" style="left:0;top:0"><rect x="643" y="278.26" width="60.9" height="10.2" fill="#4b86b8"/></svg>
<div class="t w" style="left:659.75px;top:279px;font-size:5.24px;line-height:8px;letter-spacing:-0.05px;color:#e3edf7;">Karta osoby</div>
<svg width="800" height="500" viewBox="0 0 800 500" style="left:0;top:0"><rect x="643" y="291.59" width="60.9" height="10.2" fill="#4b86b8"/></svg>
<div class="t w" style="left:656.37px;top:293px;font-size:5.24px;line-height:8px;letter-spacing:0.04px;color:#e3edf7;">Vytvoriť e-mail</div>
<svg width="800" height="500" viewBox="0 0 800 500" style="left:0;top:0"><rect x="643" y="304.92" width="60.9" height="10.2" fill="#4b86b8"/></svg>
<div class="t w" style="left:648.54px;top:306px;font-size:5.24px;line-height:8px;letter-spacing:-0.06px;color:#e3edf7;">Organizačný kalendár</div>
<svg width="800" height="500" viewBox="0 0 800 500" style="left:0;top:0"><rect x="643" y="318.25" width="60.9" height="10.2" fill="#4b86b8"/></svg>
<div class="t w" style="left:653.08px;top:319px;font-size:5.24px;line-height:8px;letter-spacing:-0.06px;color:#e3edf7;">Vyťaženie kapacít</div>
<svg width="800" height="500" viewBox="0 0 800 500" style="left:0;top:0"><rect x="643" y="331.58" width="60.9" height="10.2" fill="#4b86b8"/></svg>
<div class="t w" style="left:652.95px;top:333px;font-size:5.24px;line-height:8px;letter-spacing:-0.04px;color:#e3edf7;">Členstvo v tímoch</div>
<svg width="800" height="500" viewBox="0 0 800 500" style="left:0;top:0"><rect x="643" y="344.91" width="60.9" height="10.2" fill="#4b86b8"/></svg>
<div class="t w" style="left:654.61px;top:346px;font-size:5.24px;line-height:8px;letter-spacing:-0.08px;color:#e3edf7;">Výkazy činností</div>
<svg width="800" height="500" viewBox="0 0 800 500" style="left:0;top:0"><rect x="643" y="415.3" width="60.9" height="10.3" fill="#4b86b8"/></svg>
<div class="t w" style="left:660.31px;top:416px;font-size:5.24px;line-height:8px;letter-spacing:0px;color:#e3edf7;">Multivýber</div>
<svg width="800" height="500" viewBox="0 0 800 500" style="left:0;top:0;font-family:'Liberation Sans',sans-serif"><path d="M251.3 237L258 240.9L251.3 244.9Z" fill="#fff"/><path d="M675 241.6H679.4" stroke="#dfe8f0" stroke-width=".7"/><rect x="686.6" y="238.8" width="4.8" height="4.6" fill="none" stroke="#eef3f8" stroke-width=".7"/><path d="M698.6 238.8L703.2 243.4M703.2 238.8L698.6 243.4" stroke="#fff" stroke-width=".9"/><path d="M626.4 261.2L628.1 259.5L629.8 261.2" fill="none" stroke="#1a1a1a" stroke-width="1.1"/><path d="M626.4 324.2L628.1 325.9L629.8 324.2" fill="none" stroke="#1a1a1a" stroke-width="1.1"/><path d="M263.4 331.2L261.7 332.9L263.4 334.6" fill="none" stroke="#1a1a1a" stroke-width="1.1"/><path d="M619.6 331.2L621.3 332.9L619.6 334.6" fill="none" stroke="#1a1a1a" stroke-width="1.1"/><rect x="260" y="373.4" width="6.6" height="6.6" fill="#e9f0fb"/><path d="M261.9 375V378.2H264.9" fill="none" stroke="#2a5ea8" stroke-width=".9"/><path d="M269.9 371.6H275.3L273.4 375.6L275.3 378.6V383.2H269.9V378.6L271.8 375.6Z" fill="#9c9c9c"/><path d="M270.4 380.2H274.8" stroke="#c8c8c8" stroke-width=".6"/><path d="M624.6 372.4H629.2L626.9 375.2Z" fill="#9a9a9a"/><path d="M264.6 384.4L267.6 386.8L264.6 389.2Z" fill="#111"/><path d="M276.74 376.8H277.54M281.54 375.4V378.2M285.73 376.8H286.53M294.72 376.8H295.52M299.51 375.4V378.2M303.71 376.8H304.51M312.69 376.8H313.49M317.49 375.4V378.2M321.68 376.8H322.48M330.67 376.8H331.47M335.46 375.4V378.2M339.66 376.8H340.46M348.64 376.8H349.44M353.44 375.4V378.2M357.63 376.8H358.43M366.62 376.8H367.42M371.41 375.4V378.2M375.61 376.8H376.41M384.59 376.8H385.39M389.39 375.4V378.2M393.58 376.8H394.38M402.57 376.8H403.37M407.36 375.4V378.2M411.56 376.8H412.36M420.54 376.8H421.34M425.34 375.4V378.2M429.53 376.8H430.33M438.52 376.8H439.32M443.31 375.4V378.2M447.51 376.8H448.31M456.49 376.8H457.29M461.29 375.4V378.2M465.48 376.8H466.28M474.47 376.8H475.27M479.26 375.4V378.2M483.46 376.8H484.26M492.44 376.8H493.24M497.24 375.4V378.2M501.43 376.8H502.23M510.42 376.8H511.22M515.21 375.4V378.2M519.41 376.8H520.21M528.39 376.8H529.19M533.19 375.4V378.2M537.38 376.8H538.18M546.37 376.8H547.17M551.16 375.4V378.2M555.36 376.8H556.16M564.34 376.8H565.14M569.14 375.4V378.2M573.33 376.8H574.13M582.32 376.8H583.12M587.11 375.4V378.2M591.31 376.8H592.11M600.29 376.8H601.09M605.09 375.4V378.2M609.28 376.8H610.08M618.27 376.8H619.07" stroke="#555" stroke-width=".6" fill="none"/><path d="M698.9 348.21L700.9 350.01L698.9 351.81Z" fill="#fff"/><path d="M698.9 418.65L700.9 420.45L698.9 422.25Z" fill="#fff"/></svg>
<div class="t w" style="left:259px;top:480px;font-size:5.24px;line-height:8px;letter-spacing:-0.05px;color:#eef3fa;">Marketingové akcie</div>
<div class="t w" style="left:332.8px;top:481px;font-size:5.24px;line-height:8px;letter-spacing:-0.09px;color:#eef3fa;">Rokovanie s</div>
<div class="t w" style="left:336px;top:488px;font-size:5.24px;line-height:8px;letter-spacing:-0.01px;color:#eef3fa;">partnermi</div>
<div class="t w" style="left:402.3px;top:480px;font-size:5.24px;line-height:8px;letter-spacing:0.07px;color:#eef3fa;">Podnety</div>
<svg width="800" height="500" viewBox="0 0 800 500" style="left:0;top:0;font-family:'Liberation Sans',sans-serif"><path d="M270.6 454.6L273.2 447.8L274.8 448.4L272.2 455.2Z" fill="#2ed23a"/><rect x="275.2" y="448" width="2.2" height="7" fill="#f1f1f1"/><rect x="277.6" y="448" width="2.6" height="7" fill="#bdbdbd"/><rect x="276" y="449.4" width="1" height="3.4" fill="#4a74b8"/><rect x="284" y="452.2" width="7" height="2.8" fill="#f1f1f1"/><rect x="285" y="453" width="5" height="1" fill="#8a8a8a"/><path d="M268.2 455.3H293.2" stroke="#cfd4da" stroke-width=".8"/><rect x="272.2" y="456.8" width="2.2" height="7" fill="#bdbdbd"/><rect x="274.8" y="456.8" width="2.2" height="7" fill="#f1f1f1"/><rect x="275.3" y="457.2" width="1.2" height="6.4" fill="#2ed23a"/><rect x="278.6" y="459" width="7" height="4.6" fill="#f1f1f1"/><rect x="279.4" y="460" width="5.4" height="1" fill="#7f7f7f"/><rect x="279.4" y="461.8" width="5.4" height="1" fill="#9a9a9a"/><rect x="288.6" y="456.6" width="2.6" height="7.2" fill="#2ed23a"/><path d="M268.2 464.2H293.2" stroke="#cfd4da" stroke-width=".8"/><rect x="270.8" y="465.8" width="2.2" height="7" fill="#f1f1f1"/><rect x="273.4" y="465.8" width="2" height="7" fill="#bdbdbd"/><rect x="277.8" y="465.8" width="2" height="7" fill="#f1f1f1"/><path d="M282.2 472.4L285.2 465.6L286.8 466.2L284 473Z" fill="#2ed23a"/><rect x="287.2" y="465.8" width="2.2" height="7" fill="#f1f1f1"/><rect x="289.6" y="465.8" width="2.4" height="7" fill="#bdbdbd"/><rect x="288" y="467" width="3" height="1.2" fill="#6f8fc0"/><rect x="270.8" y="473.4" width="21.2" height="3" fill="#fff" fill-opacity=".12"/><ellipse cx="339.8" cy="452.8" rx="5.2" ry="3.4" fill="#e4e4e4"/><circle cx="336" cy="458.2" r="1" fill="#d6d6d6"/><rect x="346.2" y="449.2" width="12.2" height="7.6" rx="1.2" fill="#e8202a"/><path d="M348.4 456.4L349.2 460L352 456.4Z" fill="#e8202a"/><path d="M347.6 451.8L348.8 450.8L350 451.8L351.2 450.8L352.4 451.8L353.6 450.8L354.8 451.8L356 450.8L357.2 451.8M347.6 454.4L348.8 453.4L350 454.4L351.2 453.4L352.4 454.4L353.6 453.4L354.8 454.4L356 453.4L357.2 454.4" stroke="#fff" stroke-width=".6" fill="none"/><circle cx="340" cy="461.4" r="2.7" fill="#6d6d6d"/><path d="M335 473.6V466.4Q335 464.6 337 464.6H343Q345 464.6 345 466.4V473.6Z" fill="#5a5a5a"/><path d="M338.4 464.8H341.6L342 473.6H338Z" fill="#f01822"/><path d="M337.2 464.8H338.6L338.2 473.6H337Z M341.4 464.8H342.8L343 473.6H341.8Z" fill="#d9d9d9"/><circle cx="354.8" cy="461.4" r="2.7" fill="#777"/><path d="M349.6 473.6V466.6Q349.6 464.8 351.6 464.8H358Q360 464.8 360 466.6V473.6Z" fill="#bdbdbd"/><path d="M352.6 464.8Q354.8 466.6 357 464.8" stroke="#d83a3a" stroke-width=".6" fill="none"/><rect x="335" y="474.4" width="10" height="2.6" fill="#fff" fill-opacity=".1"/><rect x="349.6" y="474.4" width="10.4" height="2.6" fill="#fff" fill-opacity=".12"/><path d="M399.2 471.9H426.2" stroke="#2a2a2e" stroke-width="1.6"/><path d="M403.6 451.6L427.2 464.6Q427.8 465.2 427.4 466L425 470.6Q424.4 471.2 423.6 470.8H412L397.6 463.4Q396.8 462.8 397.2 462L402 452Q402.6 451.2 403.6 451.6Z" fill="#d4d4d4" stroke="#f3f3f3" stroke-width=".5"/><path d="M405 457.6L411.6 461M404.2 459.4L410.8 462.8M403.6 461.2L409 464" stroke="#333" stroke-width=".9"/><path d="M421.6 464.2L425.2 466L423.6 469.2L420 467.4Z" fill="#2b9cf2"/><rect x="403" y="474.6" width="20" height="1" fill="#fff" fill-opacity=".18"/></svg>
</body></html>
